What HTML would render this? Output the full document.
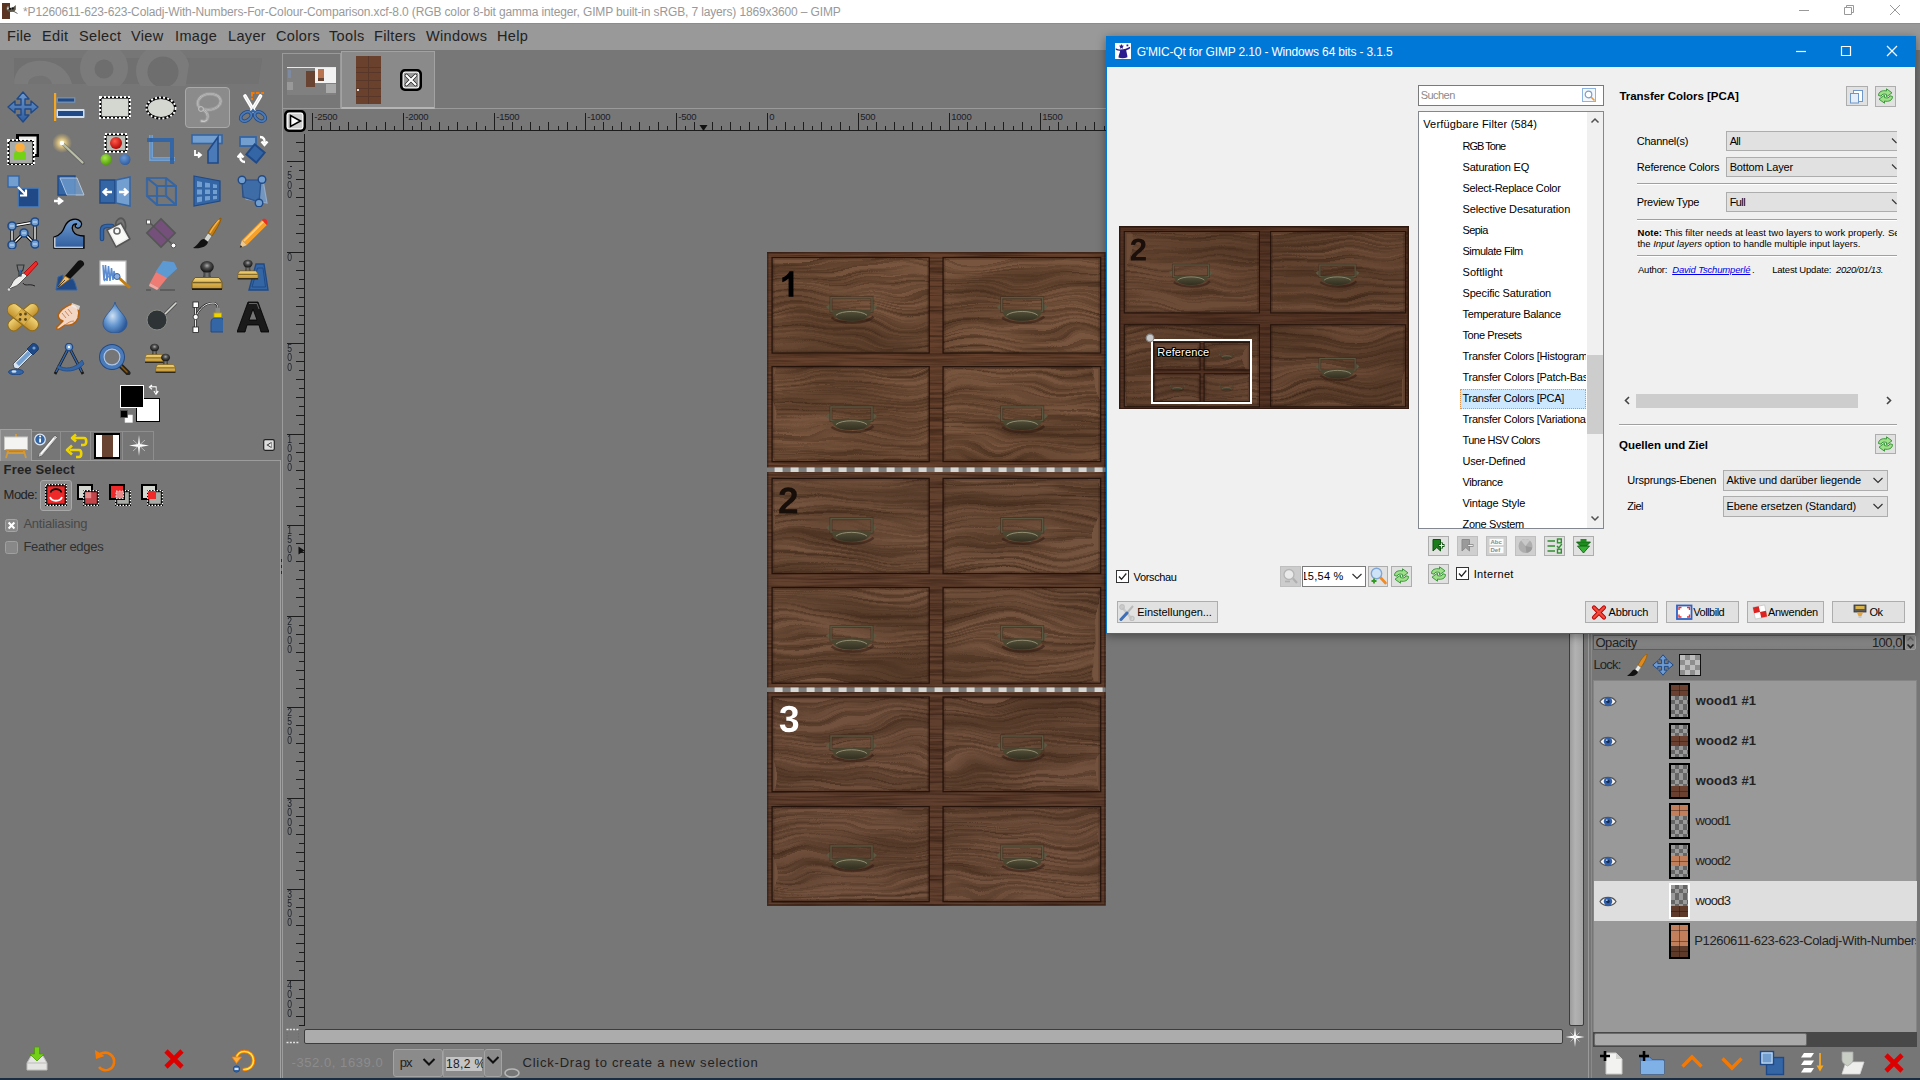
<!DOCTYPE html>
<html><head><meta charset="utf-8"><title>GIMP</title><style>
html,body{margin:0;padding:0;}
body{width:1920px;height:1080px;overflow:hidden;position:relative;background:#777;font-family:"Liberation Sans",sans-serif;}
#r{position:absolute;left:0;top:0;width:1920px;height:1080px;overflow:hidden;}
#r div,#r svg{position:absolute;}
.t{white-space:nowrap;}
</style></head><body>
<svg width="0" height="0" style="position:absolute"><defs>
<linearGradient id="gB" x1="0" y1="0" x2="0" y2="1"><stop offset="0" stop-color="#6f9bd0"/><stop offset="1" stop-color="#2f5c9e"/></linearGradient>
<linearGradient id="gT" x1="0" y1="0" x2="0" y2="1"><stop offset="0" stop-color="#f3d67a"/><stop offset="1" stop-color="#c2912b"/></linearGradient>
<radialGradient id="gGlow"><stop offset="0" stop-color="#fff8d0"/><stop offset=".35" stop-color="#f5d98a" stop-opacity=".8"/><stop offset="1" stop-color="#e0b860" stop-opacity="0"/></radialGradient>
<radialGradient id="gDrop" cx=".4" cy=".45" r=".6"><stop offset="0" stop-color="#cfe0f3"/><stop offset=".5" stop-color="#6a9bd2"/><stop offset="1" stop-color="#2d5a9c"/></radialGradient>
<radialGradient id="gRed" cx=".4" cy=".35" r=".7"><stop offset="0" stop-color="#ff5a4a"/><stop offset="1" stop-color="#b00000"/></radialGradient>
<radialGradient id="gGrn" cx=".4" cy=".35" r=".7"><stop offset="0" stop-color="#a6e84a"/><stop offset="1" stop-color="#4e9a06"/></radialGradient>
<radialGradient id="gBlu" cx=".4" cy=".35" r=".7"><stop offset="0" stop-color="#6a97d0"/><stop offset="1" stop-color="#2c5aa0"/></radialGradient>
<linearGradient id="gStampH" x1="0" y1="0" x2="1" y2="0"><stop offset="0" stop-color="#111"/><stop offset=".5" stop-color="#7a7a7a"/><stop offset="1" stop-color="#111"/></linearGradient>
<radialGradient id="gKnob" cx=".5" cy=".4" r=".6"><stop offset="0" stop-color="#a8a8a8"/><stop offset=".4" stop-color="#4e4e4e"/><stop offset="1" stop-color="#0e0e0e"/></radialGradient>
<pattern id="chk" width="8" height="8" patternUnits="userSpaceOnUse"><rect width="8" height="8" fill="#9b9b9b"/><rect width="4" height="4" fill="#666"/><rect x="4" y="4" width="4" height="4" fill="#666"/></pattern>
<pattern id="dash" width="4" height="4" patternUnits="userSpaceOnUse"><rect width="4" height="4" fill="#fff"/><rect width="2" height="2" fill="#000"/><rect x="2" y="2" width="2" height="2" fill="#000"/></pattern>

<filter id="wood" x="0" y="0" width="100%" height="100%" color-interpolation-filters="sRGB">
 <feTurbulence type="fractalNoise" baseFrequency="0.008 0.3" numOctaves="4" seed="7" result="n"/>
 <feTurbulence type="fractalNoise" baseFrequency="0.012 0.02" numOctaves="2" seed="5" result="w"/>
 <feDisplacementMap in="n" in2="w" scale="34" xChannelSelector="R" yChannelSelector="G" result="nd"/>
 <feColorMatrix in="nd" type="matrix" values="0 0 0 0 0  0 0 0 0 0  0 0 0 0 0  1.5 0 0 0 -0.55" result="a"/>
 <feFlood flood-color="#3a2415" result="f"/>
 <feComposite in="f" in2="a" operator="in" result="g"/>
 <feTurbulence type="fractalNoise" baseFrequency="0.006 0.035" numOctaves="2" seed="3" result="n2"/>
 <feDisplacementMap in="n2" in2="w" scale="30" xChannelSelector="R" yChannelSelector="G" result="n2d"/>
 <feColorMatrix in="n2d" type="matrix" values="0 0 0 0 0  0 0 0 0 0  0 0 0 0 0  0 1.3 0 0 -0.56" result="a2"/>
 <feFlood flood-color="#362113" result="f2"/>
 <feComposite in="f2" in2="a2" operator="in" result="g2"/>
 <feComposite in="g" in2="SourceAlpha" operator="in" result="gc"/>
 <feComposite in="g2" in2="SourceAlpha" operator="in" result="g2c"/>
 <feMerge><feMergeNode in="SourceGraphic"/><feMergeNode in="gc"/><feMergeNode in="g2c"/></feMerge>
</filter>
<filter id="wood2" x="0" y="0" width="100%" height="100%" color-interpolation-filters="sRGB">
 <feTurbulence type="fractalNoise" baseFrequency="0.007 0.27" numOctaves="4" seed="23" result="n"/>
 <feTurbulence type="fractalNoise" baseFrequency="0.011 0.018" numOctaves="2" seed="9" result="w"/>
 <feDisplacementMap in="n" in2="w" scale="34" xChannelSelector="R" yChannelSelector="G" result="nd"/>
 <feColorMatrix in="nd" type="matrix" values="0 0 0 0 0  0 0 0 0 0  0 0 0 0 0  1.5 0 0 0 -0.55" result="a"/>
 <feFlood flood-color="#3a2415" result="f"/>
 <feComposite in="f" in2="a" operator="in" result="g"/>
 <feTurbulence type="fractalNoise" baseFrequency="0.005 0.03" numOctaves="2" seed="11" result="n2"/>
 <feDisplacementMap in="n2" in2="w" scale="30" xChannelSelector="R" yChannelSelector="G" result="n2d"/>
 <feColorMatrix in="n2d" type="matrix" values="0 0 0 0 0  0 0 0 0 0  0 0 0 0 0  0 1.3 0 0 -0.56" result="a2"/>
 <feFlood flood-color="#362113" result="f2"/>
 <feComposite in="f2" in2="a2" operator="in" result="g2"/>
 <feComposite in="g" in2="SourceAlpha" operator="in" result="gc"/>
 <feComposite in="g2" in2="SourceAlpha" operator="in" result="g2c"/>
 <feMerge><feMergeNode in="SourceGraphic"/><feMergeNode in="gc"/><feMergeNode in="g2c"/></feMerge>
</filter>
<filter id="woodf" x="0" y="0" width="100%" height="100%" color-interpolation-filters="sRGB">
 <feTurbulence type="fractalNoise" baseFrequency="0.015 0.45" numOctaves="3" seed="4" result="n"/>
 <feColorMatrix in="n" type="matrix" values="0 0 0 0 0  0 0 0 0 0  0 0 0 0 0  1.2 0 0 0 -0.42" result="a"/>
 <feFlood flood-color="#2a160c" result="f"/>
 <feComposite in="f" in2="a" operator="in" result="g"/>
 <feMerge><feMergeNode in="SourceGraphic"/><feMergeNode in="g"/></feMerge>
</filter>
<linearGradient id="brass" x1="0" y1="0" x2="0" y2="1"><stop offset="0" stop-color="#545039"/><stop offset=".5" stop-color="#423f2d"/><stop offset="1" stop-color="#322f20"/></linearGradient>
</defs></svg>
<div id="r">
<div style="left:283px;top:50px;width:1305px;height:1028px;background:#777777;"></div>
<div style="left:283px;top:108px;width:1304px;height:1px;background:#9a9a9a;"></div>
<div style="left:282px;top:53px;width:59px;height:56px;border:1px solid #9a9a9a;border-bottom:none;box-sizing:border-box;z-index:3;"></div>
<div style="left:287px;top:66.5px;width:49px;height:1.5px;background:#e8e8e8;"></div>
<div style="left:287px;top:68px;width:49px;height:27px;background:#808080;"></div>
<div style="left:306px;top:71px;width:9px;height:16px;background:#6a4432;"></div>
<div style="left:315px;top:68px;width:21px;height:15px;background:#f2f2f2;"></div>
<div style="left:318px;top:69px;width:6px;height:9px;background:#b87350;"></div>
<div style="left:318px;top:78px;width:6px;height:3px;background:#6a4432;"></div>
<div style="left:326px;top:84px;width:10px;height:9px;background:#a9a9a9;"></div>
<div style="left:287px;top:82px;width:6px;height:8px;background:#999;"></div>
<div style="left:288px;top:70px;width:3px;height:8px;background:#7d8aa0;"></div>
<div style="left:340.5px;top:51px;width:94px;height:58px;border:1px solid #a2a2a2;border-bottom:2px solid #b5b5b5;box-sizing:border-box;background:#8a8a8a;"></div>
<div style="left:356px;top:56px;width:25px;height:48px;background:#69412d;"></div>
<div style="left:368px;top:56px;width:1px;height:48px;background:#58362a;"></div>
<div style="left:356px;top:67px;width:25px;height:1px;background:#58362a;"></div>
<div style="left:356px;top:71.5px;width:25px;height:1px;background:#58362a;"></div>
<div style="left:356px;top:80px;width:25px;height:1px;background:#58362a;"></div>
<div style="left:356px;top:88px;width:25px;height:1px;background:#58362a;"></div>
<div style="left:356px;top:96px;width:25px;height:1px;background:#58362a;"></div>
<div style="left:357px;top:89px;width:2px;height:2px;background:#ddd;"></div>
<svg style="left:400px;top:69px;" width="22" height="22" viewBox="0 0 22 22"><rect x="1.300" y="1.300" width="19.400" height="19.400" rx="3.500" fill="#9a9a9a" stroke="#000" stroke-width="2.600"/><rect x="3.200" y="3.200" width="15.600" height="15.600" rx="2" fill="none" stroke="#fff" stroke-width="1"/><path d="M6.500 6.500 L15.500 15.500 M15.500 6.500 L6.500 15.500" stroke="#222" stroke-width="3.600" stroke-linecap="round"/><path d="M6.500 6.500 L15.500 15.500 M15.500 6.500 L6.500 15.500" stroke="#fff" stroke-width="2.200" stroke-linecap="round"/></svg>
<svg style="left:284px;top:110px;" width="22" height="22" viewBox="0 0 22 22"><rect x="1.3" y="1.3" width="19.4" height="19.4" rx="3.5" fill="#cfcfcf" stroke="#000" stroke-width="2.6"/><rect x="3.2" y="3.2" width="15.6" height="15.6" rx="2" fill="none" stroke="#fff" stroke-width="1"/><path d="M6.500 5.500 L16.500 11 L6.500 16.500 Z" fill="#fff" stroke="#000" stroke-width="1.6"/></svg>
<svg style="left:0;top:0" width="1120" height="140"><g stroke="#1c1c1c" stroke-width="1" fill="none" shape-rendering="crispEdges"><path d="M312.3 113 V130.5" /><path d="M321.4 125.5 V130.5" /><path d="M330.5 122 V130.5" /><path d="M339.6 125.5 V130.5" /><path d="M348.7 122 V130.5" /><path d="M357.8 125.5 V130.5" /><path d="M366.9 122 V130.5" /><path d="M376.0 125.5 V130.5" /><path d="M385.1 122 V130.5" /><path d="M394.2 125.5 V130.5" /><path d="M403.3 113 V130.5" /><path d="M412.4 125.5 V130.5" /><path d="M421.5 122 V130.5" /><path d="M430.6 125.5 V130.5" /><path d="M439.7 122 V130.5" /><path d="M448.8 125.5 V130.5" /><path d="M457.9 122 V130.5" /><path d="M467.0 125.5 V130.5" /><path d="M476.1 122 V130.5" /><path d="M485.2 125.5 V130.5" /><path d="M494.3 113 V130.5" /><path d="M503.4 125.5 V130.5" /><path d="M512.5 122 V130.5" /><path d="M521.6 125.5 V130.5" /><path d="M530.7 122 V130.5" /><path d="M539.8 125.5 V130.5" /><path d="M548.9 122 V130.5" /><path d="M558.0 125.5 V130.5" /><path d="M567.1 122 V130.5" /><path d="M576.2 125.5 V130.5" /><path d="M585.3 113 V130.5" /><path d="M594.4 125.5 V130.5" /><path d="M603.5 122 V130.5" /><path d="M612.6 125.5 V130.5" /><path d="M621.7 122 V130.5" /><path d="M630.8 125.5 V130.5" /><path d="M639.9 122 V130.5" /><path d="M649.0 125.5 V130.5" /><path d="M658.1 122 V130.5" /><path d="M667.2 125.5 V130.5" /><path d="M676.3 113 V130.5" /><path d="M685.4 125.5 V130.5" /><path d="M694.5 122 V130.5" /><path d="M703.6 125.5 V130.5" /><path d="M712.7 122 V130.5" /><path d="M721.8 125.5 V130.5" /><path d="M730.9 122 V130.5" /><path d="M740.0 125.5 V130.5" /><path d="M749.1 122 V130.5" /><path d="M758.2 125.5 V130.5" /><path d="M767.3 113 V130.5" /><path d="M776.4 125.5 V130.5" /><path d="M785.5 122 V130.5" /><path d="M794.6 125.5 V130.5" /><path d="M803.7 122 V130.5" /><path d="M812.8 125.5 V130.5" /><path d="M821.9 122 V130.5" /><path d="M831.0 125.5 V130.5" /><path d="M840.1 122 V130.5" /><path d="M849.2 125.5 V130.5" /><path d="M858.3 113 V130.5" /><path d="M867.4 125.5 V130.5" /><path d="M876.5 122 V130.5" /><path d="M885.6 125.5 V130.5" /><path d="M894.7 122 V130.5" /><path d="M903.8 125.5 V130.5" /><path d="M912.9 122 V130.5" /><path d="M922.0 125.5 V130.5" /><path d="M931.1 122 V130.5" /><path d="M940.2 125.5 V130.5" /><path d="M949.3 113 V130.5" /><path d="M958.4 125.5 V130.5" /><path d="M967.5 122 V130.5" /><path d="M976.6 125.5 V130.5" /><path d="M985.7 122 V130.5" /><path d="M994.8 125.5 V130.5" /><path d="M1003.9 122 V130.5" /><path d="M1013.0 125.5 V130.5" /><path d="M1022.1 122 V130.5" /><path d="M1031.2 125.5 V130.5" /><path d="M1040.3 113 V130.5" /><path d="M1049.4 125.5 V130.5" /><path d="M1058.5 122 V130.5" /><path d="M1067.6 125.5 V130.5" /><path d="M1076.7 122 V130.5" /><path d="M1085.8 125.5 V130.5" /><path d="M1094.9 122 V130.5" /><path d="M1104.0 125.5 V130.5" /><path d="M308 130.5 H1110"/></g><path d="M699.5 125 L707.500 125 L703.500 131 Z" fill="#111"/></svg>
<div class="t" style="left:314.29999999999995px;top:109.8px;font-size:9.5px;line-height:13px;color:#1c2028;letter-spacing:-.25px;">-2500</div>
<div class="t" style="left:405.29999999999995px;top:109.8px;font-size:9.5px;line-height:13px;color:#1c2028;letter-spacing:-.25px;">-2000</div>
<div class="t" style="left:496.29999999999995px;top:109.8px;font-size:9.5px;line-height:13px;color:#1c2028;letter-spacing:-.25px;">-1500</div>
<div class="t" style="left:587.3px;top:109.8px;font-size:9.5px;line-height:13px;color:#1c2028;letter-spacing:-.25px;">-1000</div>
<div class="t" style="left:678.3px;top:109.8px;font-size:9.5px;line-height:13px;color:#1c2028;letter-spacing:-.25px;">-500</div>
<div class="t" style="left:769.3px;top:109.8px;font-size:9.5px;line-height:13px;color:#1c2028;letter-spacing:-.25px;">0</div>
<div class="t" style="left:860.3px;top:109.8px;font-size:9.5px;line-height:13px;color:#1c2028;letter-spacing:-.25px;">500</div>
<div class="t" style="left:951.3px;top:109.8px;font-size:9.5px;line-height:13px;color:#1c2028;letter-spacing:-.25px;">1000</div>
<div class="t" style="left:1042.3px;top:109.8px;font-size:9.5px;line-height:13px;color:#1c2028;letter-spacing:-.25px;">1500</div>
<svg style="left:0;top:0" width="310" height="1030"><g stroke="#1c1c1c" stroke-width="1" fill="none" shape-rendering="crispEdges"><path d="M296 142.8 H304.5"/><path d="M299 151.9 H304.5"/><path d="M287 161.0 H304.5"/><path d="M299 170.1 H304.5"/><path d="M296 179.2 H304.5"/><path d="M299 188.3 H304.5"/><path d="M296 197.4 H304.5"/><path d="M299 206.5 H304.5"/><path d="M296 215.6 H304.5"/><path d="M299 224.7 H304.5"/><path d="M296 233.8 H304.5"/><path d="M299 242.9 H304.5"/><path d="M287 252.0 H304.5"/><path d="M299 261.1 H304.5"/><path d="M296 270.2 H304.5"/><path d="M299 279.3 H304.5"/><path d="M296 288.4 H304.5"/><path d="M299 297.5 H304.5"/><path d="M296 306.6 H304.5"/><path d="M299 315.7 H304.5"/><path d="M296 324.8 H304.5"/><path d="M299 333.9 H304.5"/><path d="M287 343.0 H304.5"/><path d="M299 352.1 H304.5"/><path d="M296 361.2 H304.5"/><path d="M299 370.3 H304.5"/><path d="M296 379.4 H304.5"/><path d="M299 388.5 H304.5"/><path d="M296 397.6 H304.5"/><path d="M299 406.7 H304.5"/><path d="M296 415.8 H304.5"/><path d="M299 424.9 H304.5"/><path d="M287 434.0 H304.5"/><path d="M299 443.1 H304.5"/><path d="M296 452.2 H304.5"/><path d="M299 461.3 H304.5"/><path d="M296 470.4 H304.5"/><path d="M299 479.5 H304.5"/><path d="M296 488.6 H304.5"/><path d="M299 497.7 H304.5"/><path d="M296 506.8 H304.5"/><path d="M299 515.9 H304.5"/><path d="M287 525.0 H304.5"/><path d="M299 534.1 H304.5"/><path d="M296 543.2 H304.5"/><path d="M299 552.3 H304.5"/><path d="M296 561.4 H304.5"/><path d="M299 570.5 H304.5"/><path d="M296 579.6 H304.5"/><path d="M299 588.7 H304.5"/><path d="M296 597.8 H304.5"/><path d="M299 606.9 H304.5"/><path d="M287 616.0 H304.5"/><path d="M299 625.1 H304.5"/><path d="M296 634.2 H304.5"/><path d="M299 643.3 H304.5"/><path d="M296 652.4 H304.5"/><path d="M299 661.5 H304.5"/><path d="M296 670.6 H304.5"/><path d="M299 679.7 H304.5"/><path d="M296 688.8 H304.5"/><path d="M299 697.9 H304.5"/><path d="M287 707.0 H304.5"/><path d="M299 716.1 H304.5"/><path d="M296 725.2 H304.5"/><path d="M299 734.3 H304.5"/><path d="M296 743.4 H304.5"/><path d="M299 752.5 H304.5"/><path d="M296 761.6 H304.5"/><path d="M299 770.7 H304.5"/><path d="M296 779.8 H304.5"/><path d="M299 788.9 H304.5"/><path d="M287 798.0 H304.5"/><path d="M299 807.1 H304.5"/><path d="M296 816.2 H304.5"/><path d="M299 825.3 H304.5"/><path d="M296 834.4 H304.5"/><path d="M299 843.5 H304.5"/><path d="M296 852.6 H304.5"/><path d="M299 861.7 H304.5"/><path d="M296 870.8 H304.5"/><path d="M299 879.9 H304.5"/><path d="M287 889.0 H304.5"/><path d="M299 898.1 H304.5"/><path d="M296 907.2 H304.5"/><path d="M299 916.3 H304.5"/><path d="M296 925.4 H304.5"/><path d="M299 934.5 H304.5"/><path d="M296 943.6 H304.5"/><path d="M299 952.7 H304.5"/><path d="M296 961.8 H304.5"/><path d="M299 970.9 H304.5"/><path d="M287 980.0 H304.5"/><path d="M299 989.1 H304.5"/><path d="M296 998.2 H304.5"/><path d="M299 1007.3 H304.5"/><path d="M296 1016.4 H304.5"/><path d="M299 1025.5 H304.5"/><path d="M304.5 134 V1026"/></g><path d="M298.500 546.500 L304.500 550.500 L298.500 554.500 Z" fill="#111"/></svg>
<div style="left:290px;top:166.3px;width:2px;height:1px;background:#20242c;"></div>
<div class="t" style="left:287.3px;top:168.35000000000002px;font-size:9.5px;line-height:13px;color:#1c2028;transform:scale(.9,1.17);transform-origin:50% 50%;">5</div>
<div class="t" style="left:287.3px;top:177.60000000000002px;font-size:9.5px;line-height:13px;color:#1c2028;transform:scale(.9,1.17);transform-origin:50% 50%;">0</div>
<div class="t" style="left:287.3px;top:186.85000000000002px;font-size:9.5px;line-height:13px;color:#1c2028;transform:scale(.9,1.17);transform-origin:50% 50%;">0</div>
<div class="t" style="left:287.3px;top:250.10000000000002px;font-size:9.5px;line-height:13px;color:#1c2028;transform:scale(.9,1.17);transform-origin:50% 50%;">0</div>
<div class="t" style="left:287.3px;top:341.1px;font-size:9.5px;line-height:13px;color:#1c2028;transform:scale(.9,1.17);transform-origin:50% 50%;">5</div>
<div class="t" style="left:287.3px;top:350.35px;font-size:9.5px;line-height:13px;color:#1c2028;transform:scale(.9,1.17);transform-origin:50% 50%;">0</div>
<div class="t" style="left:287.3px;top:359.6px;font-size:9.5px;line-height:13px;color:#1c2028;transform:scale(.9,1.17);transform-origin:50% 50%;">0</div>
<div class="t" style="left:287.3px;top:432.1px;font-size:9.5px;line-height:13px;color:#1c2028;transform:scale(.9,1.17);transform-origin:50% 50%;">1</div>
<div class="t" style="left:287.3px;top:441.35px;font-size:9.5px;line-height:13px;color:#1c2028;transform:scale(.9,1.17);transform-origin:50% 50%;">0</div>
<div class="t" style="left:287.3px;top:450.6px;font-size:9.5px;line-height:13px;color:#1c2028;transform:scale(.9,1.17);transform-origin:50% 50%;">0</div>
<div class="t" style="left:287.3px;top:459.85px;font-size:9.5px;line-height:13px;color:#1c2028;transform:scale(.9,1.17);transform-origin:50% 50%;">0</div>
<div class="t" style="left:287.3px;top:523.0999999999999px;font-size:9.5px;line-height:13px;color:#1c2028;transform:scale(.9,1.17);transform-origin:50% 50%;">1</div>
<div class="t" style="left:287.3px;top:532.3499999999999px;font-size:9.5px;line-height:13px;color:#1c2028;transform:scale(.9,1.17);transform-origin:50% 50%;">5</div>
<div class="t" style="left:287.3px;top:541.5999999999999px;font-size:9.5px;line-height:13px;color:#1c2028;transform:scale(.9,1.17);transform-origin:50% 50%;">0</div>
<div class="t" style="left:287.3px;top:550.8499999999999px;font-size:9.5px;line-height:13px;color:#1c2028;transform:scale(.9,1.17);transform-origin:50% 50%;">0</div>
<div class="t" style="left:287.3px;top:614.0999999999999px;font-size:9.5px;line-height:13px;color:#1c2028;transform:scale(.9,1.17);transform-origin:50% 50%;">2</div>
<div class="t" style="left:287.3px;top:623.3499999999999px;font-size:9.5px;line-height:13px;color:#1c2028;transform:scale(.9,1.17);transform-origin:50% 50%;">0</div>
<div class="t" style="left:287.3px;top:632.5999999999999px;font-size:9.5px;line-height:13px;color:#1c2028;transform:scale(.9,1.17);transform-origin:50% 50%;">0</div>
<div class="t" style="left:287.3px;top:641.8499999999999px;font-size:9.5px;line-height:13px;color:#1c2028;transform:scale(.9,1.17);transform-origin:50% 50%;">0</div>
<div class="t" style="left:287.3px;top:705.0999999999999px;font-size:9.5px;line-height:13px;color:#1c2028;transform:scale(.9,1.17);transform-origin:50% 50%;">2</div>
<div class="t" style="left:287.3px;top:714.3499999999999px;font-size:9.5px;line-height:13px;color:#1c2028;transform:scale(.9,1.17);transform-origin:50% 50%;">5</div>
<div class="t" style="left:287.3px;top:723.5999999999999px;font-size:9.5px;line-height:13px;color:#1c2028;transform:scale(.9,1.17);transform-origin:50% 50%;">0</div>
<div class="t" style="left:287.3px;top:732.8499999999999px;font-size:9.5px;line-height:13px;color:#1c2028;transform:scale(.9,1.17);transform-origin:50% 50%;">0</div>
<div class="t" style="left:287.3px;top:796.0999999999999px;font-size:9.5px;line-height:13px;color:#1c2028;transform:scale(.9,1.17);transform-origin:50% 50%;">3</div>
<div class="t" style="left:287.3px;top:805.3499999999999px;font-size:9.5px;line-height:13px;color:#1c2028;transform:scale(.9,1.17);transform-origin:50% 50%;">0</div>
<div class="t" style="left:287.3px;top:814.5999999999999px;font-size:9.5px;line-height:13px;color:#1c2028;transform:scale(.9,1.17);transform-origin:50% 50%;">0</div>
<div class="t" style="left:287.3px;top:823.8499999999999px;font-size:9.5px;line-height:13px;color:#1c2028;transform:scale(.9,1.17);transform-origin:50% 50%;">0</div>
<div class="t" style="left:287.3px;top:887.0999999999999px;font-size:9.5px;line-height:13px;color:#1c2028;transform:scale(.9,1.17);transform-origin:50% 50%;">3</div>
<div class="t" style="left:287.3px;top:896.3499999999999px;font-size:9.5px;line-height:13px;color:#1c2028;transform:scale(.9,1.17);transform-origin:50% 50%;">5</div>
<div class="t" style="left:287.3px;top:905.5999999999999px;font-size:9.5px;line-height:13px;color:#1c2028;transform:scale(.9,1.17);transform-origin:50% 50%;">0</div>
<div class="t" style="left:287.3px;top:914.8499999999999px;font-size:9.5px;line-height:13px;color:#1c2028;transform:scale(.9,1.17);transform-origin:50% 50%;">0</div>
<div class="t" style="left:287.3px;top:978.0999999999999px;font-size:9.5px;line-height:13px;color:#1c2028;transform:scale(.9,1.17);transform-origin:50% 50%;">4</div>
<div class="t" style="left:287.3px;top:987.3499999999999px;font-size:9.5px;line-height:13px;color:#1c2028;transform:scale(.9,1.17);transform-origin:50% 50%;">0</div>
<div class="t" style="left:287.3px;top:996.5999999999999px;font-size:9.5px;line-height:13px;color:#1c2028;transform:scale(.9,1.17);transform-origin:50% 50%;">0</div>
<div class="t" style="left:287.3px;top:1005.8499999999999px;font-size:9.5px;line-height:13px;color:#1c2028;transform:scale(.9,1.17);transform-origin:50% 50%;">0</div>
<svg style="left:767px;top:252px" width="338.7" height="653.700" viewBox="0 0 338.7 653.700">
<filter id="wood" x="0" y="0" width="100%" height="100%" color-interpolation-filters="sRGB">
 <feTurbulence type="fractalNoise" baseFrequency="0.008 0.3" numOctaves="4" seed="7" result="n"/>
 <feTurbulence type="fractalNoise" baseFrequency="0.012 0.02" numOctaves="2" seed="5" result="w"/>
 <feDisplacementMap in="n" in2="w" scale="34" xChannelSelector="R" yChannelSelector="G" result="nd"/>
 <feColorMatrix in="nd" type="matrix" values="0 0 0 0 0  0 0 0 0 0  0 0 0 0 0  1.5 0 0 0 -0.55" result="a"/>
 <feFlood flood-color="#3a2415" result="f"/>
 <feComposite in="f" in2="a" operator="in" result="g"/>
 <feTurbulence type="fractalNoise" baseFrequency="0.006 0.035" numOctaves="2" seed="3" result="n2"/>
 <feDisplacementMap in="n2" in2="w" scale="30" xChannelSelector="R" yChannelSelector="G" result="n2d"/>
 <feColorMatrix in="n2d" type="matrix" values="0 0 0 0 0  0 0 0 0 0  0 0 0 0 0  0 1.3 0 0 -0.56" result="a2"/>
 <feFlood flood-color="#362113" result="f2"/>
 <feComposite in="f2" in2="a2" operator="in" result="g2"/>
 <feComposite in="g" in2="SourceAlpha" operator="in" result="gc"/>
 <feComposite in="g2" in2="SourceAlpha" operator="in" result="g2c"/>
 <feMerge><feMergeNode in="SourceGraphic"/><feMergeNode in="gc"/><feMergeNode in="g2c"/></feMerge>
</filter>
<filter id="wood2" x="0" y="0" width="100%" height="100%" color-interpolation-filters="sRGB">
 <feTurbulence type="fractalNoise" baseFrequency="0.007 0.27" numOctaves="4" seed="23" result="n"/>
 <feTurbulence type="fractalNoise" baseFrequency="0.011 0.018" numOctaves="2" seed="9" result="w"/>
 <feDisplacementMap in="n" in2="w" scale="34" xChannelSelector="R" yChannelSelector="G" result="nd"/>
 <feColorMatrix in="nd" type="matrix" values="0 0 0 0 0  0 0 0 0 0  0 0 0 0 0  1.5 0 0 0 -0.55" result="a"/>
 <feFlood flood-color="#3a2415" result="f"/>
 <feComposite in="f" in2="a" operator="in" result="g"/>
 <feTurbulence type="fractalNoise" baseFrequency="0.005 0.03" numOctaves="2" seed="11" result="n2"/>
 <feDisplacementMap in="n2" in2="w" scale="30" xChannelSelector="R" yChannelSelector="G" result="n2d"/>
 <feColorMatrix in="n2d" type="matrix" values="0 0 0 0 0  0 0 0 0 0  0 0 0 0 0  0 1.3 0 0 -0.56" result="a2"/>
 <feFlood flood-color="#362113" result="f2"/>
 <feComposite in="f2" in2="a2" operator="in" result="g2"/>
 <feComposite in="g" in2="SourceAlpha" operator="in" result="gc"/>
 <feComposite in="g2" in2="SourceAlpha" operator="in" result="g2c"/>
 <feMerge><feMergeNode in="SourceGraphic"/><feMergeNode in="gc"/><feMergeNode in="g2c"/></feMerge>
</filter>
<filter id="woodf" x="0" y="0" width="100%" height="100%" color-interpolation-filters="sRGB">
 <feTurbulence type="fractalNoise" baseFrequency="0.015 0.45" numOctaves="3" seed="4" result="n"/>
 <feColorMatrix in="n" type="matrix" values="0 0 0 0 0  0 0 0 0 0  0 0 0 0 0  1.2 0 0 0 -0.42" result="a"/>
 <feFlood flood-color="#2a160c" result="f"/>
 <feComposite in="f" in2="a" operator="in" result="g"/>
 <feMerge><feMergeNode in="SourceGraphic"/><feMergeNode in="g"/></feMerge>
</filter>
<linearGradient id="brass" x1="0" y1="0" x2="0" y2="1"><stop offset="0" stop-color="#545039"/><stop offset=".5" stop-color="#423f2d"/><stop offset="1" stop-color="#322f20"/></linearGradient>
<rect x="0" y="0" width="338.7" height="217.7" fill="#66422e" filter="url(#woodf)"/><g filter="url(#wood)"><rect x="5.1" y="5.5" width="157.1" height="95.5" fill="#78553e"/><rect x="5.1" y="114.7" width="157.1" height="94.9" fill="#78553e"/><rect x="176.1" y="5.5" width="157.6" height="95.5" fill="#78553e"/><rect x="176.1" y="114.7" width="157.6" height="94.9" fill="#78553e"/></g><rect x="5.1" y="5.5" width="157.1" height="95.5" fill="none" stroke="#1a0c06" stroke-width="1.30" opacity=".85"/><rect x="6.6" y="7.0" width="154.1" height="92.5" fill="none" stroke="#2a140c" stroke-width="1.6" opacity=".22"/><rect x="5.1" y="114.7" width="157.1" height="94.9" fill="none" stroke="#1a0c06" stroke-width="1.30" opacity=".85"/><rect x="6.6" y="116.2" width="154.1" height="91.9" fill="none" stroke="#2a140c" stroke-width="1.6" opacity=".22"/><rect x="176.1" y="5.5" width="157.6" height="95.5" fill="none" stroke="#1a0c06" stroke-width="1.30" opacity=".85"/><rect x="177.6" y="7.0" width="154.6" height="92.5" fill="none" stroke="#2a140c" stroke-width="1.6" opacity=".22"/><rect x="176.1" y="114.7" width="157.6" height="94.9" fill="none" stroke="#1a0c06" stroke-width="1.30" opacity=".85"/><rect x="177.6" y="116.2" width="154.6" height="91.9" fill="none" stroke="#2a140c" stroke-width="1.6" opacity=".22"/><rect x="0.75" y="0.75" width="337.2" height="216.2" fill="none" stroke="#2a140c" stroke-width="1.5" opacity=".5"/><g transform="translate(84.5 56.7) scale(1)"><path d="M-25.5 -2 L-21.5 -5 L-21.5 2 Z M25.5 -2 L21.5 -5 L21.500 2 Z" fill="#5c5842"/><path d="M-20 9 C-10 16 14 16 22 8" fill="none" stroke="#24120a" stroke-width="2.5" opacity=".45"/><rect x="-20.500" y="-11" width="41" height="13.500" fill="none" stroke="#3a2a1c" stroke-width="3" opacity=".6"/><rect x="-20.500" y="-11" width="41" height="13.500" fill="none" stroke="#5a563f" stroke-width="1.400"/><path d="M-19.500 3 C-19 8 -14 12 0 12 C14 12 19 8 19.500 3 C12 0 -12 0 -19.500 3 Z" fill="#4a4630"/><ellipse cx="0" cy="7.300" rx="15.500" ry="4.800" fill="url(#brass)"/><path d="M-15.500 6.500 C-10 1.500 10 1.500 15.500 6.500" fill="none" stroke="#9a9478" stroke-width=".900"/></g><g transform="translate(84.5 166) scale(1)"><path d="M-25.5 -2 L-21.5 -5 L-21.5 2 Z M25.5 -2 L21.5 -5 L21.500 2 Z" fill="#5c5842"/><path d="M-20 9 C-10 16 14 16 22 8" fill="none" stroke="#24120a" stroke-width="2.5" opacity=".45"/><rect x="-20.500" y="-11" width="41" height="13.500" fill="none" stroke="#3a2a1c" stroke-width="3" opacity=".6"/><rect x="-20.500" y="-11" width="41" height="13.500" fill="none" stroke="#5a563f" stroke-width="1.400"/><path d="M-19.500 3 C-19 8 -14 12 0 12 C14 12 19 8 19.500 3 C12 0 -12 0 -19.500 3 Z" fill="#4a4630"/><ellipse cx="0" cy="7.300" rx="15.500" ry="4.800" fill="url(#brass)"/><path d="M-15.500 6.500 C-10 1.500 10 1.500 15.500 6.500" fill="none" stroke="#9a9478" stroke-width=".900"/></g><g transform="translate(255.2 56.7) scale(1)"><path d="M-25.5 -2 L-21.5 -5 L-21.5 2 Z M25.5 -2 L21.5 -5 L21.500 2 Z" fill="#5c5842"/><path d="M-20 9 C-10 16 14 16 22 8" fill="none" stroke="#24120a" stroke-width="2.5" opacity=".45"/><rect x="-20.500" y="-11" width="41" height="13.500" fill="none" stroke="#3a2a1c" stroke-width="3" opacity=".6"/><rect x="-20.500" y="-11" width="41" height="13.500" fill="none" stroke="#5a563f" stroke-width="1.400"/><path d="M-19.500 3 C-19 8 -14 12 0 12 C14 12 19 8 19.500 3 C12 0 -12 0 -19.500 3 Z" fill="#4a4630"/><ellipse cx="0" cy="7.300" rx="15.500" ry="4.800" fill="url(#brass)"/><path d="M-15.500 6.500 C-10 1.500 10 1.500 15.500 6.500" fill="none" stroke="#9a9478" stroke-width=".900"/></g><g transform="translate(255.2 166) scale(1)"><path d="M-25.5 -2 L-21.5 -5 L-21.5 2 Z M25.5 -2 L21.5 -5 L21.500 2 Z" fill="#5c5842"/><path d="M-20 9 C-10 16 14 16 22 8" fill="none" stroke="#24120a" stroke-width="2.5" opacity=".45"/><rect x="-20.500" y="-11" width="41" height="13.500" fill="none" stroke="#3a2a1c" stroke-width="3" opacity=".6"/><rect x="-20.500" y="-11" width="41" height="13.500" fill="none" stroke="#5a563f" stroke-width="1.400"/><path d="M-19.500 3 C-19 8 -14 12 0 12 C14 12 19 8 19.500 3 C12 0 -12 0 -19.500 3 Z" fill="#4a4630"/><ellipse cx="0" cy="7.300" rx="15.500" ry="4.800" fill="url(#brass)"/><path d="M-15.500 6.500 C-10 1.500 10 1.500 15.500 6.500" fill="none" stroke="#9a9478" stroke-width=".900"/></g><path transform="translate(12.49 44.80) scale(0.01732 -0.01732)" d="M806 0H525V1059Q371 915 162 846V1101Q272 1137 401 1237.5Q530 1338 578 1472H806Z" fill="#000"/><rect x="0" y="217.7" width="338.7" height="220" fill="#63412f" filter="url(#woodf)"/><g filter="url(#wood2)"><rect x="5.1" y="226.4" width="157.1" height="95.2" fill="#75543f"/><rect x="5.1" y="335.5" width="157.1" height="95.7" fill="#75543f"/><rect x="176.1" y="226.4" width="157.6" height="95.2" fill="#75543f"/><rect x="176.1" y="335.5" width="157.6" height="95.7" fill="#75543f"/></g><rect x="5.1" y="226.4" width="157.1" height="95.2" fill="none" stroke="#1a0c06" stroke-width="1.30" opacity=".85"/><rect x="6.6" y="227.9" width="154.1" height="92.2" fill="none" stroke="#2a140c" stroke-width="1.6" opacity=".22"/><rect x="5.1" y="335.5" width="157.1" height="95.7" fill="none" stroke="#1a0c06" stroke-width="1.30" opacity=".85"/><rect x="6.6" y="337.0" width="154.1" height="92.7" fill="none" stroke="#2a140c" stroke-width="1.6" opacity=".22"/><rect x="176.1" y="226.4" width="157.6" height="95.2" fill="none" stroke="#1a0c06" stroke-width="1.30" opacity=".85"/><rect x="177.6" y="227.9" width="154.6" height="92.2" fill="none" stroke="#2a140c" stroke-width="1.6" opacity=".22"/><rect x="176.1" y="335.5" width="157.6" height="95.7" fill="none" stroke="#1a0c06" stroke-width="1.30" opacity=".85"/><rect x="177.6" y="337.0" width="154.6" height="92.7" fill="none" stroke="#2a140c" stroke-width="1.6" opacity=".22"/><rect x="0.75" y="218.45" width="337.2" height="218.5" fill="none" stroke="#2a140c" stroke-width="1.5" opacity=".5"/><g transform="translate(84.5 277.59999999999997) scale(1)"><path d="M-25.5 -2 L-21.5 -5 L-21.5 2 Z M25.5 -2 L21.5 -5 L21.500 2 Z" fill="#5c5842"/><path d="M-20 9 C-10 16 14 16 22 8" fill="none" stroke="#24120a" stroke-width="2.5" opacity=".45"/><rect x="-20.500" y="-11" width="41" height="13.500" fill="none" stroke="#3a2a1c" stroke-width="3" opacity=".6"/><rect x="-20.500" y="-11" width="41" height="13.500" fill="none" stroke="#5a563f" stroke-width="1.400"/><path d="M-19.500 3 C-19 8 -14 12 0 12 C14 12 19 8 19.500 3 C12 0 -12 0 -19.500 3 Z" fill="#4a4630"/><ellipse cx="0" cy="7.300" rx="15.500" ry="4.800" fill="url(#brass)"/><path d="M-15.500 6.500 C-10 1.500 10 1.500 15.500 6.500" fill="none" stroke="#9a9478" stroke-width=".900"/></g><g transform="translate(84.5 385.5) scale(1)"><path d="M-25.5 -2 L-21.5 -5 L-21.5 2 Z M25.5 -2 L21.5 -5 L21.500 2 Z" fill="#5c5842"/><path d="M-20 9 C-10 16 14 16 22 8" fill="none" stroke="#24120a" stroke-width="2.5" opacity=".45"/><rect x="-20.500" y="-11" width="41" height="13.500" fill="none" stroke="#3a2a1c" stroke-width="3" opacity=".6"/><rect x="-20.500" y="-11" width="41" height="13.500" fill="none" stroke="#5a563f" stroke-width="1.400"/><path d="M-19.500 3 C-19 8 -14 12 0 12 C14 12 19 8 19.500 3 C12 0 -12 0 -19.500 3 Z" fill="#4a4630"/><ellipse cx="0" cy="7.300" rx="15.500" ry="4.800" fill="url(#brass)"/><path d="M-15.500 6.500 C-10 1.500 10 1.500 15.500 6.500" fill="none" stroke="#9a9478" stroke-width=".900"/></g><g transform="translate(255.2 277.59999999999997) scale(1)"><path d="M-25.5 -2 L-21.5 -5 L-21.5 2 Z M25.5 -2 L21.5 -5 L21.500 2 Z" fill="#5c5842"/><path d="M-20 9 C-10 16 14 16 22 8" fill="none" stroke="#24120a" stroke-width="2.5" opacity=".45"/><rect x="-20.500" y="-11" width="41" height="13.500" fill="none" stroke="#3a2a1c" stroke-width="3" opacity=".6"/><rect x="-20.500" y="-11" width="41" height="13.500" fill="none" stroke="#5a563f" stroke-width="1.400"/><path d="M-19.500 3 C-19 8 -14 12 0 12 C14 12 19 8 19.500 3 C12 0 -12 0 -19.500 3 Z" fill="#4a4630"/><ellipse cx="0" cy="7.300" rx="15.500" ry="4.800" fill="url(#brass)"/><path d="M-15.500 6.500 C-10 1.500 10 1.500 15.500 6.500" fill="none" stroke="#9a9478" stroke-width=".900"/></g><g transform="translate(255.2 385.5) scale(1)"><path d="M-25.5 -2 L-21.5 -5 L-21.5 2 Z M25.5 -2 L21.5 -5 L21.500 2 Z" fill="#5c5842"/><path d="M-20 9 C-10 16 14 16 22 8" fill="none" stroke="#24120a" stroke-width="2.5" opacity=".45"/><rect x="-20.500" y="-11" width="41" height="13.500" fill="none" stroke="#3a2a1c" stroke-width="3" opacity=".6"/><rect x="-20.500" y="-11" width="41" height="13.500" fill="none" stroke="#5a563f" stroke-width="1.400"/><path d="M-19.500 3 C-19 8 -14 12 0 12 C14 12 19 8 19.500 3 C12 0 -12 0 -19.500 3 Z" fill="#4a4630"/><ellipse cx="0" cy="7.300" rx="15.500" ry="4.800" fill="url(#brass)"/><path d="M-15.500 6.500 C-10 1.500 10 1.500 15.500 6.500" fill="none" stroke="#9a9478" stroke-width=".900"/></g><path transform="translate(10.90 261.40) scale(0.01825 -0.01825)" d="M71 0V195Q126 316 227.5 431.0Q329 546 483 671Q631 791 690.5 869.0Q750 947 750 1022Q750 1206 565 1206Q475 1206 427.5 1157.5Q380 1109 366 1012L83 1028Q107 1224 229.5 1327.0Q352 1430 563 1430Q791 1430 913.0 1326.0Q1035 1222 1035 1034Q1035 935 996.0 855.0Q957 775 896.0 707.5Q835 640 760.5 581.0Q686 522 616.0 466.0Q546 410 488.5 353.0Q431 296 403 231H1057V0Z" fill="#170e0a"/><rect x="0" y="437.7" width="338.7" height="216" fill="#603f2e" filter="url(#woodf)"/><g filter="url(#wood)"><rect x="5.1" y="445.0" width="157.1" height="94.7" fill="#72513e"/><rect x="5.1" y="554.7" width="157.1" height="95.0" fill="#72513e"/><rect x="176.1" y="445.0" width="157.6" height="94.7" fill="#72513e"/><rect x="176.1" y="554.7" width="157.6" height="95.0" fill="#72513e"/></g><rect x="5.1" y="445.0" width="157.1" height="94.7" fill="none" stroke="#1a0c06" stroke-width="1.30" opacity=".85"/><rect x="6.6" y="446.5" width="154.1" height="91.7" fill="none" stroke="#2a140c" stroke-width="1.6" opacity=".22"/><rect x="5.1" y="554.7" width="157.1" height="95.0" fill="none" stroke="#1a0c06" stroke-width="1.30" opacity=".85"/><rect x="6.6" y="556.2" width="154.1" height="92.0" fill="none" stroke="#2a140c" stroke-width="1.6" opacity=".22"/><rect x="176.1" y="445.0" width="157.6" height="94.7" fill="none" stroke="#1a0c06" stroke-width="1.30" opacity=".85"/><rect x="177.6" y="446.5" width="154.6" height="91.7" fill="none" stroke="#2a140c" stroke-width="1.6" opacity=".22"/><rect x="176.1" y="554.7" width="157.6" height="95.0" fill="none" stroke="#1a0c06" stroke-width="1.30" opacity=".85"/><rect x="177.6" y="556.2" width="154.6" height="92.0" fill="none" stroke="#2a140c" stroke-width="1.6" opacity=".22"/><rect x="0.75" y="438.45" width="337.2" height="214.5" fill="none" stroke="#2a140c" stroke-width="1.5" opacity=".5"/><g transform="translate(84.5 495.0) scale(1)"><path d="M-25.5 -2 L-21.5 -5 L-21.5 2 Z M25.5 -2 L21.5 -5 L21.500 2 Z" fill="#5c5842"/><path d="M-20 9 C-10 16 14 16 22 8" fill="none" stroke="#24120a" stroke-width="2.5" opacity=".45"/><rect x="-20.500" y="-11" width="41" height="13.500" fill="none" stroke="#3a2a1c" stroke-width="3" opacity=".6"/><rect x="-20.500" y="-11" width="41" height="13.500" fill="none" stroke="#5a563f" stroke-width="1.400"/><path d="M-19.500 3 C-19 8 -14 12 0 12 C14 12 19 8 19.500 3 C12 0 -12 0 -19.500 3 Z" fill="#4a4630"/><ellipse cx="0" cy="7.300" rx="15.500" ry="4.800" fill="url(#brass)"/><path d="M-15.500 6.500 C-10 1.500 10 1.500 15.500 6.500" fill="none" stroke="#9a9478" stroke-width=".900"/></g><g transform="translate(84.5 605.0) scale(1)"><path d="M-25.5 -2 L-21.5 -5 L-21.5 2 Z M25.5 -2 L21.5 -5 L21.500 2 Z" fill="#5c5842"/><path d="M-20 9 C-10 16 14 16 22 8" fill="none" stroke="#24120a" stroke-width="2.5" opacity=".45"/><rect x="-20.500" y="-11" width="41" height="13.500" fill="none" stroke="#3a2a1c" stroke-width="3" opacity=".6"/><rect x="-20.500" y="-11" width="41" height="13.500" fill="none" stroke="#5a563f" stroke-width="1.400"/><path d="M-19.500 3 C-19 8 -14 12 0 12 C14 12 19 8 19.500 3 C12 0 -12 0 -19.500 3 Z" fill="#4a4630"/><ellipse cx="0" cy="7.300" rx="15.500" ry="4.800" fill="url(#brass)"/><path d="M-15.500 6.500 C-10 1.500 10 1.500 15.500 6.500" fill="none" stroke="#9a9478" stroke-width=".900"/></g><g transform="translate(255.2 495.0) scale(1)"><path d="M-25.5 -2 L-21.5 -5 L-21.5 2 Z M25.5 -2 L21.5 -5 L21.500 2 Z" fill="#5c5842"/><path d="M-20 9 C-10 16 14 16 22 8" fill="none" stroke="#24120a" stroke-width="2.5" opacity=".45"/><rect x="-20.500" y="-11" width="41" height="13.500" fill="none" stroke="#3a2a1c" stroke-width="3" opacity=".6"/><rect x="-20.500" y="-11" width="41" height="13.500" fill="none" stroke="#5a563f" stroke-width="1.400"/><path d="M-19.500 3 C-19 8 -14 12 0 12 C14 12 19 8 19.500 3 C12 0 -12 0 -19.500 3 Z" fill="#4a4630"/><ellipse cx="0" cy="7.300" rx="15.500" ry="4.800" fill="url(#brass)"/><path d="M-15.500 6.500 C-10 1.500 10 1.500 15.500 6.500" fill="none" stroke="#9a9478" stroke-width=".900"/></g><g transform="translate(255.2 605.0) scale(1)"><path d="M-25.5 -2 L-21.5 -5 L-21.5 2 Z M25.5 -2 L21.5 -5 L21.500 2 Z" fill="#5c5842"/><path d="M-20 9 C-10 16 14 16 22 8" fill="none" stroke="#24120a" stroke-width="2.5" opacity=".45"/><rect x="-20.500" y="-11" width="41" height="13.500" fill="none" stroke="#3a2a1c" stroke-width="3" opacity=".6"/><rect x="-20.500" y="-11" width="41" height="13.500" fill="none" stroke="#5a563f" stroke-width="1.400"/><path d="M-19.500 3 C-19 8 -14 12 0 12 C14 12 19 8 19.500 3 C12 0 -12 0 -19.500 3 Z" fill="#4a4630"/><ellipse cx="0" cy="7.300" rx="15.500" ry="4.800" fill="url(#brass)"/><path d="M-15.500 6.500 C-10 1.500 10 1.500 15.500 6.500" fill="none" stroke="#9a9478" stroke-width=".900"/></g><path transform="translate(11.84 479.88) scale(0.01831 -0.01831)" d="M1065 391Q1065 193 935.0 85.0Q805 -23 565 -23Q338 -23 204.0 81.5Q70 186 47 383L333 408Q360 205 564 205Q665 205 721.0 255.0Q777 305 777 408Q777 502 709.0 552.0Q641 602 507 602H409V829H501Q622 829 683.0 878.5Q744 928 744 1020Q744 1107 695.5 1156.5Q647 1206 554 1206Q467 1206 413.5 1158.0Q360 1110 352 1022L71 1042Q93 1224 222.0 1327.0Q351 1430 559 1430Q780 1430 904.5 1330.5Q1029 1231 1029 1055Q1029 923 951.5 838.0Q874 753 728 725V721Q890 702 977.5 614.5Q1065 527 1065 391Z" fill="#fff"/><rect x="0" y="215.4" width="338.7" height="4.6" fill="#7c7c7c"/><path d="M0 217.70000000000002 H338.7" stroke="#d6d6d4" stroke-width="4.6" stroke-dasharray="8 8" stroke-dashoffset="-7.6"/><rect x="0" y="435.4" width="338.7" height="4.6" fill="#7c7c7c"/><path d="M0 437.7 H338.7" stroke="#d6d6d4" stroke-width="4.6" stroke-dasharray="8 8" stroke-dashoffset="-7.6"/></svg>
<div style="left:303.5px;top:1029px;width:1259px;height:15px;background:#acacac;border:1px solid #3c3c3c;border-radius:2px;box-sizing:border-box;"></div>
<div style="left:1569px;top:110px;width:15px;height:916px;background:linear-gradient(90deg,#9c9c9c,#b2b2b2 40%,#a4a4a4);border:1px solid #3c3c3c;border-radius:2px;box-sizing:border-box;"></div>
<svg style="left:286px;top:1028px;" width="14" height="16" viewBox="0 0 14 16"><rect x="1" y="1.500" width="11.500" height="13" fill="none" stroke="#6a6a6a" stroke-width=".800" stroke-dasharray="1.500 1.500"/><path d="M.5 1.500 H13 M.5 14.500 H13" stroke="#e4e4e4" stroke-width="1.300" stroke-dasharray="2 1.300"/></svg>
<svg style="left:1564px;top:1026px;" width="22" height="22" viewBox="0 0 22 22"><path d="M11 1 L12 9.500 L20.500 11 L12 12.500 L11 21 L10 12.500 L1.500 11 L10 9.500 Z" fill="#fff"/><path d="M6.500 6.500 L15.500 15.500 M15.500 6.500 L6.500 15.500" stroke="#ddd" stroke-width=".6"/></svg>
<div class="t" style="left:291.5px;top:1053.5px;font-size:13px;line-height:18px;color:#8c8c8c;letter-spacing:0.567px;">-352.0, 1639.0</div>
<div style="left:392.5px;top:1049px;width:50.5px;height:28px;background:#8b8b8b;border:1px solid #a3a3a3;border-radius:3px;box-sizing:border-box;"></div>
<div class="t" style="left:399.7px;top:1053.5px;font-size:13px;line-height:18px;color:#222;letter-spacing:-0.887px;">px</div>
<svg style="left:421px;top:1056px;" width="16" height="12" viewBox="0 0 16 12"><path d="M2.500 3 L8 8.500 L13.500 3" fill="none" stroke="#111" stroke-width="2"/></svg>
<div style="left:443px;top:1049px;width:41px;height:28px;background:#8b8b8b;border:1px solid #9a9a9a;border-right:none;box-sizing:border-box;"></div>
<div style="left:445.5px;top:1056.5px;width:36px;height:14px;background:#c4c4c4;"></div>
<div class="t" style="left:446px;top:1055.5px;font-size:12px;line-height:16px;color:#222;letter-spacing:.35px;width:36.5px;overflow:hidden;">18,2 %</div>
<div style="left:483.5px;top:1049px;width:18.5px;height:28px;background:#8b8b8b;border:1px solid #a3a3a3;border-radius:3px;box-sizing:border-box;"></div>
<svg style="left:485px;top:1054px;" width="16" height="12" viewBox="0 0 16 12"><path d="M2.500 3 L8 8.500 L13.500 3" fill="none" stroke="#111" stroke-width="2"/></svg>
<svg style="left:503px;top:1067px;" width="18" height="11" viewBox="0 0 18 11"><ellipse cx="9" cy="6" rx="7" ry="4" fill="none" stroke="#b8b8b8" stroke-width="1.6"/></svg>
<div class="t" style="left:522.5px;top:1053.5px;font-size:13px;line-height:18px;color:#222;letter-spacing:0.772px;">Click-Drag to create a new selection</div>
<div style="left:0px;top:0px;width:1920px;height:23px;background:#fff;"></div>
<svg style="left:0px;top:0px;" width="22" height="23" viewBox="0 0 22 23"><rect x="2" y="3" width="8" height="16" fill="#5a3421"/><path d="M6 8 L8 5.500 L10 8 L13.500 7 L15.800 5 L15.800 9.500 L14 12 L9 12 L6.500 10 Z" fill="#5c5648"/><path d="M8 6 L8.800 9 L7 9.500 Z" fill="#fff"/><circle cx="10" cy="8.800" r="1.100" fill="#111"/><circle cx="12.800" cy="8.600" r="1" fill="#111"/><path d="M14 11.500 L17.500 13.500" stroke="#444" stroke-width=".800"/><path d="M10 12 L14 12 L13 11 Z" fill="#a8641e"/></svg>
<div class="t" style="left:23px;top:3.5px;font-size:12px;line-height:16px;color:#999;letter-spacing:-0.134px;">*P1260611-623-623-Coladj-With-Numbers-For-Colour-Comparison.xcf-8.0 (RGB color 8-bit gamma integer, GIMP built-in sRGB, 7 layers) 1869x3600 – GIMP</div>
<svg style="left:1795px;top:0px;" width="120" height="23" viewBox="0 0 120 23"><path d="M4 10.5 L14 10.5" stroke="#999" stroke-width="1"/><path d="M49.5 7.5 L56.5 7.5 L56.5 14.5 L49.5 14.5 Z M51.5 7.5 L51.5 5.5 L58.5 5.5 L58.5 12.5 L56.5 12.5" fill="none" stroke="#999" stroke-width="1"/><path d="M95 5 L105 15 M105 5 L95 15" stroke="#999" stroke-width="1"/></svg>
<div style="left:0px;top:23px;width:1920px;height:27px;background:#999;border-top:1px solid #8c8c8c;box-sizing:border-box;"></div>
<div class="t" style="left:7px;top:26.0px;font-size:14.5px;line-height:20px;color:#222;letter-spacing:.35px;">File</div>
<div class="t" style="left:42px;top:26.0px;font-size:14.5px;line-height:20px;color:#222;letter-spacing:.35px;">Edit</div>
<div class="t" style="left:79px;top:26.0px;font-size:14.5px;line-height:20px;color:#222;letter-spacing:.35px;">Select</div>
<div class="t" style="left:131px;top:26.0px;font-size:14.5px;line-height:20px;color:#222;letter-spacing:.35px;">View</div>
<div class="t" style="left:175px;top:26.0px;font-size:14.5px;line-height:20px;color:#222;letter-spacing:.35px;">Image</div>
<div class="t" style="left:228px;top:26.0px;font-size:14.5px;line-height:20px;color:#222;letter-spacing:.35px;">Layer</div>
<div class="t" style="left:276px;top:26.0px;font-size:14.5px;line-height:20px;color:#222;letter-spacing:.35px;">Colors</div>
<div class="t" style="left:329px;top:26.0px;font-size:14.5px;line-height:20px;color:#222;letter-spacing:.35px;">Tools</div>
<div class="t" style="left:374px;top:26.0px;font-size:14.5px;line-height:20px;color:#222;letter-spacing:.35px;">Filters</div>
<div class="t" style="left:426px;top:26.0px;font-size:14.5px;line-height:20px;color:#222;letter-spacing:.35px;">Windows</div>
<div class="t" style="left:497px;top:26.0px;font-size:14.5px;line-height:20px;color:#222;letter-spacing:.35px;">Help</div>
<div style="left:0px;top:50px;width:280px;height:1028px;background:#767676;"></div>
<svg style="left:0px;top:50px;" width="280" height="36" viewBox="0 0 280 36"><path d="M14 8 L262 8 L258 34 L14 34 Z" fill="#707070"/><path d="M14 34 C14 14 34 8 50 12 C64 16 70 26 72 34 Z" fill="#7b7b7b"/><path d="M28 34 C28 24 50 22 52 34 Z" fill="#737373"/><circle cx="104" cy="18" r="24" fill="#7b7b7b"/><circle cx="163" cy="21" r="27" fill="#7b7b7b"/><circle cx="104" cy="19" r="9.500" fill="#6e6e6e"/><circle cx="163" cy="22" r="15.500" fill="#6e6e6e"/><path d="M190 8 L262 8 L258 34 L186 34 Z" fill="#727272"/></svg>
<svg style="left:7px;top:91px;" width="32" height="32" viewBox="0 0 32 32"><path d="M16 1 L22 8 L18 8 L18 14 L24 14 L24 10 L31 16 L24 22 L24 18 L18 18 L18 24 L22 24 L16 31 L10 24 L14 24 L14 18 L8 18 L8 22 L1 16 L8 10 L8 14 L14 14 L14 8 L10 8 Z" fill="url(#gB)" stroke="#204a87" stroke-width="1.4" stroke-linejoin="round"/></svg>
<svg style="left:53px;top:91px;" width="32" height="32" viewBox="0 0 32 32"><rect x="1" y="2" width="2.2" height="28" fill="#f5a623"/><rect x="3.5" y="6" width="19" height="6" rx="1" fill="#729fcf" opacity=".55"/><rect x="5" y="7.5" width="16" height="3" fill="#204a87"/>
<rect x="3.5" y="18" width="28" height="9" rx="1" fill="#cfe0f5"/><rect x="5" y="20" width="25" height="5" fill="#204a87"/></svg>
<svg style="left:99px;top:91px;" width="32" height="32" viewBox="0 0 32 32"><rect x="1" y="6" width="30" height="21" fill="#000"/><rect x="1" y="6" width="30" height="21" fill="none" stroke="#fff" stroke-width="2.2" stroke-dasharray="2 2" /><rect x="2.6" y="7.6" width="26.8" height="17.8" fill="#d3d7cf"/></svg>
<svg style="left:145px;top:91px;" width="32" height="32" viewBox="0 0 32 32"><ellipse cx="16" cy="17" rx="15.5" ry="11.5" fill="#000"/><ellipse cx="16" cy="17" rx="14.6" ry="10.6" fill="none" stroke="#fff" stroke-width="2" stroke-dasharray="2 2.1"/><ellipse cx="16" cy="17" rx="13" ry="9" fill="#d3d7cf"/></svg>
<div style="left:184.5px;top:86.5px;width:45px;height:41px;background:#8b8b8b;border:1px solid #a9a9a9;border-radius:4px;box-sizing:border-box;"></div>
<svg style="left:191px;top:91px;" width="32" height="32" viewBox="0 0 32 32"><g fill="none" stroke-linecap="round"><path d="M9.500 17.500 C3 12 9 3 19 3 C30 3 32 11 27 15.500 C22 20 13 19.500 8.500 16.500 M8.500 16.500 C15 19.500 18.500 23 16 28.500 C15 30.500 12 30.500 10.500 30" stroke="#9c9c9c" stroke-width="3.600"/><path d="M9.500 17.500 C3 12 9 3 19 3 C30 3 32 11 27 15.500 C22 20 13 19.500 8.500 16.500 M8.500 16.500 C15 19.500 18.500 23 16 28.500 C15 30.500 12 30.500 10.500 30" stroke="#c9c9c9" stroke-width="1.500"/><path d="M9.500 17.500 C3 12 9 3 19 3 C30 3 32 11 27 15.500 C22 20 13 19.500 8.500 16.500 M8.500 16.500 C15 19.500 18.500 23 16 28.500" stroke="#808080" stroke-width=".500"/></g><circle cx="10" cy="18" r="2.400" fill="#8f8f8f" stroke="#c4c4c4" stroke-width="1"/></svg>
<svg style="left:237px;top:91px;" width="32" height="32" viewBox="0 0 32 32"><path d="M14 2 L27 2 M15 2 L15 9" stroke="#f57900" stroke-width="2" stroke-dasharray="3.500 1.500" fill="none"/>
<path d="M8 5 L17.500 21" stroke="#fff" stroke-width="3.600" stroke-linecap="round"/><path d="M23.500 5 L14 21" stroke="#fff" stroke-width="3.600" stroke-linecap="round"/>
<path d="M8 5 L17.500 21 M23.500 5 L14 21" stroke="#d0d0d0" stroke-width=".600" fill="none"/>
<ellipse cx="9" cy="25.500" rx="5.800" ry="4" transform="rotate(-35 9 25.500)" fill="none" stroke="#204a87" stroke-width="3.600"/><ellipse cx="23" cy="25.500" rx="5.800" ry="4" transform="rotate(35 23 25.500)" fill="none" stroke="#204a87" stroke-width="3.600"/>
<ellipse cx="9" cy="25.500" rx="5.800" ry="4" transform="rotate(-35 9 25.500)" fill="none" stroke="#4a7ab8" stroke-width="2"/><ellipse cx="23" cy="25.500" rx="5.800" ry="4" transform="rotate(35 23 25.500)" fill="none" stroke="#4a7ab8" stroke-width="2"/>
<path d="M12.500 21.500 L16 17.500 L19.500 21.500 Z" fill="#3465a4"/></svg>
<svg style="left:7px;top:133px;" width="32" height="32" viewBox="0 0 32 32"><rect x="9" y="1" width="23" height="23" fill="#000"/><rect x="12" y="3.5" width="17.5" height="17.5" fill="#eeeeec"/><rect x="1" y="7" width="26" height="25" fill="#000"/><rect x="1" y="7" width="26" height="25" fill="none" stroke="#fff" stroke-width="2.2" stroke-dasharray="2 2" /><rect x="2.6" y="8.6" width="22.8" height="21.8" fill="#a9aba6"/><path d="M7 27 L7 21 C7 16 19 16 19 21 L19 27 Z" fill="#73d216"/><circle cx="13" cy="14.5" r="4.8" fill="#fcaf3e"/></svg>
<svg style="left:53px;top:133px;" width="32" height="32" viewBox="0 0 32 32"><circle cx="9" cy="10" r="10" fill="url(#gGlow)"/><path d="M10 11 L30 30" stroke="#555" stroke-width="3.6" stroke-linecap="round" opacity=".55"/><path d="M10 11 L29.5 29.5" stroke="#b9bea4" stroke-width="2.2" stroke-linecap="round"/><circle cx="9" cy="10" r="2.2" fill="#fff"/></svg>
<svg style="left:99px;top:133px;" width="32" height="32" viewBox="0 0 32 32"><rect x="6" y="1" width="22" height="18" fill="#000"/><rect x="6" y="1" width="22" height="18" fill="none" stroke="#fff" stroke-width="2.2" stroke-dasharray="2 2" /><rect x="7.6" y="2.6" width="18.8" height="14.8" fill="#babdb6"/><circle cx="17" cy="10" r="6" fill="url(#gRed)"/><circle cx="7" cy="26.5" r="5.5" fill="url(#gGrn)"/><circle cx="26" cy="26.5" r="5.5" fill="url(#gBlu)"/></svg>
<svg style="left:145px;top:133px;" width="32" height="32" viewBox="0 0 32 32"><path d="M6 2 L6 26 L30 26" fill="none" stroke="#729fcf" stroke-width="4"/><path d="M2 7 L27 7 L27 31" fill="none" stroke="#3465a4" stroke-width="4"/><path d="M6 2 L6 26 L30 26" fill="none" stroke="#204a87" stroke-width=".6" opacity=".5"/></svg>
<svg style="left:191px;top:133px;" width="32" height="32" viewBox="0 0 32 32"><rect x="1" y="2" width="30" height="8.5" fill="#729fcf" stroke="#3465a4" stroke-width="1.6"/><path d="M17 30 L17 18 L27 4 L27 30 Z" fill="#4a7ab8" stroke="#204a87" stroke-width="1.6"/><path d="M4 17 L4 22 L9 22 M7 19.5 L10 22 L7 24.5" fill="none" stroke="#fff" stroke-width="1.8"/></svg>
<svg style="left:237px;top:133px;" width="32" height="32" viewBox="0 0 32 32"><rect x="3" y="4" width="16" height="9" fill="#729fcf" stroke="#3465a4" stroke-width="1.8"/><rect x="12" y="14" width="13" height="13" transform="rotate(40 18.5 20.5)" fill="#3465a4" stroke="#204a87" stroke-width="2"/>
<path d="M23 4 C27 4 28 7 27.5 10 M24.5 8.5 L27.5 12 L30.5 8.5" fill="none" stroke="#fff" stroke-width="2.4"/><path d="M8 29 C4 29 3 26 3.5 23 M.5 24.5 L3.5 21 L6.5 24.5" fill="none" stroke="#fff" stroke-width="2.4"/></svg>
<svg style="left:7px;top:175px;" width="32" height="32" viewBox="0 0 32 32"><rect x="1" y="1" width="11" height="11" fill="#729fcf" stroke="#3465a4" stroke-width="1.4"/><rect x="11" y="13" width="21" height="19" fill="#204a87" stroke="#4a7ab8" stroke-width="1.6"/><path d="M11 12 L19 20 M19 14.5 L19 20.5 L13 20.5" fill="none" stroke="#fff" stroke-width="2.2"/></svg>
<svg style="left:53px;top:175px;" width="32" height="32" viewBox="0 0 32 32"><path d="M5 1 L22 1 L22 20 L5 20 Z" fill="#3465a4" stroke="#204a87" stroke-width="1.4"/><path d="M7 3 L24 3 L31 20 L14 20 Z" fill="#729fcf" stroke="#cfe0f5" stroke-width="1" opacity=".75"/><path d="M1 26 L8 26 M5 23 L9 26 L5 29" fill="none" stroke="#fff" stroke-width="2.4"/></svg>
<svg style="left:99px;top:175px;" width="32" height="32" viewBox="0 0 32 32"><path d="M1 5 L16 5 L16 28 L1 28 Z" fill="#3465a4" stroke="#204a87" stroke-width="1.5"/><path d="M17 5 L31 2 L31 31 L17 28 Z" fill="#729fcf" stroke="#3465a4" stroke-width="1.5"/><path d="M13 17 L5 17 M8 13.5 L4.5 17 L8 20.5" fill="none" stroke="#fff" stroke-width="2.4"/><path d="M20 17 L28 17 M25 13.5 L28.5 17 L25 20.5" fill="none" stroke="#fff" stroke-width="2.4"/></svg>
<svg style="left:145px;top:175px;" width="32" height="32" viewBox="0 0 32 32"><g fill="none" stroke="#3465a4" stroke-width="2.2" stroke-linejoin="round"><rect x="12" y="11" width="19" height="19"/><path d="M2 3 L21 3 L21 21 L2 21 Z" opacity=".85"/><path d="M2 3 L12 11 M21 3 L31 11 M2 21 L12 30 M21 21 L31 30"/></g></svg>
<svg style="left:191px;top:175px;" width="32" height="32" viewBox="0 0 32 32"><path d="M3 1 L29 6 L29 26 L3 31 Z" fill="#3465a4" stroke="#204a87" stroke-width="1.2"/><g fill="#729fcf"><path d="M6 6 L11 7 L11 12 L6 12Z"/><path d="M14 7.5 L19 8.3 L19 12.5 L14 12.5Z"/><path d="M22 9 L26 9.7 L26 13 L22 13Z"/><rect x="6" y="14.5" width="5" height="5"/><rect x="14" y="14.5" width="5" height="4.5"/><rect x="22" y="15" width="4" height="4"/><path d="M6 22 L11 21.5 L11 26.5 L6 27.5Z"/><path d="M14 21.3 L19 21 L19 25 L14 25.8Z"/><path d="M22 21 L26 20.8 L26 24 L22 24.5Z"/></g></svg>
<svg style="left:237px;top:175px;" width="32" height="32" viewBox="0 0 32 32"><path d="M5 5 L26 5 L30 28 L9 24 Z" fill="#729fcf" stroke="#9db8dc" stroke-width="1.2" opacity=".8"/><path d="M5 5 L24 5 L22 27 L6 22 Z" fill="#3465a4" stroke="#204a87" stroke-width="1.4" opacity=".85"/><circle cx="5" cy="5" r="3.8" fill="#729fcf" stroke="#204a87" stroke-width="1.4"/><circle cx="25" cy="4.5" r="3.8" fill="#729fcf" stroke="#204a87" stroke-width="1.4"/><circle cx="22" cy="28" r="3.8" fill="#729fcf" stroke="#204a87" stroke-width="1.4"/></svg>
<svg style="left:7px;top:217px;" width="32" height="32" viewBox="0 0 32 32"><path d="M5 9 L28 5 L28 27 L17 16 L5 28 Z" fill="none" stroke="#000" stroke-width="3.2" stroke-linejoin="round"/><path d="M5 9 L28 5 L28 27 L17 16 L5 28 Z" fill="none" stroke="#fff" stroke-width="1.4" stroke-linejoin="round"/><circle cx="5" cy="9" r="4" fill="#729fcf" stroke="#204a87" stroke-width="1.6"/><path d="M3 9 L7 9" stroke="#cfe0f5" stroke-width="1"/><circle cx="28" cy="5" r="4" fill="#729fcf" stroke="#204a87" stroke-width="1.6"/><path d="M26 5 L30 5" stroke="#cfe0f5" stroke-width="1"/><circle cx="28" cy="27" r="4" fill="#729fcf" stroke="#204a87" stroke-width="1.6"/><path d="M26 27 L30 27" stroke="#cfe0f5" stroke-width="1"/><circle cx="17" cy="16" r="4" fill="#729fcf" stroke="#204a87" stroke-width="1.6"/><path d="M15 16 L19 16" stroke="#cfe0f5" stroke-width="1"/><circle cx="5" cy="28" r="4" fill="#729fcf" stroke="#204a87" stroke-width="1.6"/><path d="M3 28 L7 28" stroke="#cfe0f5" stroke-width="1"/></svg>
<svg style="left:53px;top:217px;" width="32" height="32" viewBox="0 0 32 32"><path d="M1 31 L1 20 C8 18 10 14 12 9 C15 2 24 0 28 5 C30 8 27 12 24 11 C21 10 22 7 24 7 C20 6 18 10 20 14 C22 18 26 19 31 19 L31 31 Z" fill="url(#gB)" stroke="#000" stroke-width="1.3"/><path d="M1.8 20.5 L1.8 30.2 L30 30.2" fill="none" stroke="#fff" stroke-width="1.1"/></svg>
<svg style="left:99px;top:217px;" width="32" height="32" viewBox="0 0 32 32"><path d="M3 22 L3 13 C3 10 5 9 8 9 L13 9" fill="none" stroke="#204a87" stroke-width="4.5" stroke-linecap="round"/><path d="M3 22 L3 13 C3 10 5 9 8 9 L13 9" fill="none" stroke="#3465a4" stroke-width="2.4" stroke-linecap="round"/><path d="M17 10 C15 3 22 -1 25 3 C27 6 27 9 26 13" fill="none" stroke="#555" stroke-width="1.8"/><path d="M8 13 L22 6 L31 22 L17 30 Z" fill="#eeeeec" stroke="#555" stroke-width="1.6" stroke-linejoin="round"/><path d="M11 14 L21 9 L28 21 L18 27 Z" fill="#fff" opacity=".7"/><circle cx="18" cy="14" r="3" fill="none" stroke="#666" stroke-width="1.6"/></svg>
<svg style="left:145px;top:217px;" width="32" height="32" viewBox="0 0 32 32"><rect x="6" y="6" width="20" height="20" transform="rotate(45 16 16)" fill="#75507b" stroke="#555" stroke-width="1.6"/><path d="M4 5 L28 28" stroke="#555" stroke-width="1.6"/><rect x="1.5" y="3" width="4" height="4" fill="#fff" stroke="#555" stroke-width="1"/><circle cx="28.5" cy="28.5" r="2.4" fill="#fff" stroke="#555" stroke-width="1"/></svg>
<svg style="left:191px;top:217px;" width="32" height="32" viewBox="0 0 32 32"><path d="M30 1 C27 2 20 10 17 16 L21 19 C25 13 30 5 30 1 Z" fill="#c17d11" stroke="#8f5902" stroke-width="1"/><path d="M28 3 C24 8 21 12 19 16" stroke="#f5b04a" stroke-width="1.4" fill="none"/><path d="M17 16 L13 22 L17 25 L21 19 Z" fill="#d3d7cf" stroke="#666" stroke-width=".8"/><path d="M13 22 C9 22 8 27 2 31 C9 32 16 30 17 25 Z" fill="#111"/></svg>
<svg style="left:237px;top:217px;" width="32" height="32" viewBox="0 0 32 32"><path d="M25 3 L30 8 L10 28 L5 23 Z" fill="#f5a02a" stroke="#ce7b0c" stroke-width="1"/><path d="M26.5 4.5 L7 24" stroke="#fcd28a" stroke-width="1.6"/><path d="M25 3 C27 0 32 3 30 8 Z" fill="#ef2929"/><path d="M5 23 L10 28 L2.5 31 Z" fill="#e9c78f"/><path d="M2.5 31 L3.6 28 L5.4 29.9 Z" fill="#222"/></svg>
<svg style="left:7px;top:259px;" width="32" height="32" viewBox="0 0 32 32"><path d="M29 2 L31 5 L20 17 L17 14 Z" fill="#ef2929" stroke="#a40000" stroke-width=".8"/><path d="M18 15 L20 17 L12 25 C9 28 5 28 3 30 L2 29 C5 26 5 23 8 20 L16 14 Z" fill="#eeeeec" stroke="#555" stroke-width="1"/><path d="M10 6 L17 6 L16 11 L14 13 L14 17 L12 17 L12 13 L11 11 Z" fill="none" stroke="#2e3436" stroke-width="1.1"/><path d="M12.5 11 L14.5 11 L13.5 16 Z" fill="#3465a4"/><path d="M16 24 C18 28 22 24 28 27" fill="none" stroke="#222" stroke-width="1"/><circle cx="2" cy="30.5" r="1.2" fill="#ddd"/></svg>
<svg style="left:53px;top:259px;" width="32" height="32" viewBox="0 0 32 32"><path d="M3 31 L5 18 L10 16 L10 20 L20 20 L22 24 L24 31 Z" fill="#204a87" stroke="#3465a4" stroke-width="1"/><path d="M25 2 C28 0 32 3 31 6 L17 20 L12 17 Z" fill="#111"/><path d="M12 17 L17 20 L9 26 L4 29 Z" fill="#e9b96e" stroke="#8f5902" stroke-width=".8"/><path d="M5 28 L12 21" stroke="#222" stroke-width=".8"/></svg>
<svg style="left:99px;top:259px;" width="32" height="32" viewBox="0 0 32 32"><rect x="1" y="2" width="26" height="24" fill="#fff" stroke="#bbb" stroke-width="1.2"/><path d="M4 6 L5 21 L6.5 6 L8 22 L9.5 7 L11 22 L12.5 9 L14 21 L15 12 L16.5 19 M5 22 C10 16 14 14 19 16" fill="none" stroke="#5b8bd0" stroke-width="1.5"/><path d="M19 18 L30 28" stroke="#c17d11" stroke-width="3" stroke-linecap="round"/><circle cx="18" cy="17.5" r="3" fill="#8fb0de" stroke="#3465a4" stroke-width="1"/></svg>
<svg style="left:145px;top:259px;" width="32" height="32" viewBox="0 0 32 32"><path d="M17 2 L28 2 L32 8 L22 20 L11 14 Z" fill="#5d9ad3" transform="rotate(8 20 10)"/><path d="M11 13 L22 19 L14 29 L5 24 Z" fill="#ee7b74"/><path d="M5 24 L14 29 L12 31 L4 27 Z" fill="#f3a59f"/><path d="M1 31 L6 31 M15 31 L30 31" stroke="#555" stroke-width="1.6"/></svg>
<svg style="left:191px;top:259px;" width="32" height="32" viewBox="0 0 32 32"><g transform="translate(0 1) scale(1)">
<path d="M10.500 9.500 C13 12 13.500 15 11 19.500 L21 19.500 C18.500 15 19 12 21.500 9.500 Z" fill="url(#gStampH)"/>
<ellipse cx="16" cy="6.800" rx="6.800" ry="5.800" fill="url(#gKnob)"/>
<path d="M4 17.500 L28 17.500 L31 22 L31 29 L1 29 L1 22 Z" fill="url(#gT)" stroke="#7a5a12" stroke-width="1"/>
<rect x="1.500" y="21.800" width="29" height="1.500" fill="#5c4a1a" opacity=".8"/><rect x="1" y="28.300" width="30" height="1.700" fill="#1a1a1a"/></g></svg>
<svg style="left:237px;top:259px;" width="32" height="32" viewBox="0 0 32 32"><path d="M19 5 L27 5 L31 31 L12 31 Z" fill="#3465a4" stroke="#204a87" stroke-width="1.4"/><path d="M20.5 9 L26 9 L28.5 28 L15 28 Z" fill="none" stroke="#204a87" stroke-width="1"/><g transform="translate(0 0) scale(0.68)">
<path d="M10.500 9.500 C13 12 13.500 15 11 19.500 L21 19.500 C18.500 15 19 12 21.500 9.500 Z" fill="url(#gStampH)"/>
<ellipse cx="16" cy="6.800" rx="6.800" ry="5.800" fill="url(#gKnob)"/>
<path d="M4 17.500 L28 17.500 L31 22 L31 29 L1 29 L1 22 Z" fill="url(#gT)" stroke="#7a5a12" stroke-width="1"/>
<rect x="1.500" y="21.800" width="29" height="1.500" fill="#5c4a1a" opacity=".8"/><rect x="1" y="28.300" width="30" height="1.700" fill="#1a1a1a"/></g></svg>
<svg style="left:7px;top:301px;" width="32" height="32" viewBox="0 0 32 32"><g transform="rotate(-40 16 16)"><rect x="-2" y="10.500" width="36" height="11.500" rx="5.500" fill="url(#gT)" stroke="#8f6b1a" stroke-width="1"/></g><g transform="rotate(38 16 16)"><rect x="-2" y="10" width="36" height="12.500" rx="6" fill="url(#gT)" stroke="#8f6b1a" stroke-width="1"/><rect x="10" y="11" width="12" height="10.500" fill="#d9ae4a" stroke="#b8902e" stroke-width=".600"/></g><g fill="#5a4a20"><circle cx="13.500" cy="13.500" r="1.400"/><circle cx="18.500" cy="13" r="1.400"/><circle cx="13" cy="18.500" r="1.400"/><circle cx="18.500" cy="18.500" r="1.400"/></g></svg>
<svg style="left:53px;top:301px;" width="32" height="32" viewBox="0 0 32 32"><path d="M20 3 C25 4 27 10 25 17 C23 23 17 25 12 24 L6 28 C3 29 3 26 5 25 L10 20 C5 19 4 14 7 11 C11 6 15 4 20 3 Z" fill="#f3d6c3" stroke="#b35f0e" stroke-width="1.5" stroke-linejoin="round"/><path d="M9 12 L13 17 M12 10 L16 15 M15 8 L19 13 M12 24 C15 22 17 20 21 20" fill="none" stroke="#c98a5c" stroke-width="1"/><path d="M19 2 L27 5 L26 9 L18 5 Z" fill="#eee" opacity=".8"/></svg>
<svg style="left:99px;top:301px;" width="32" height="32" viewBox="0 0 32 32"><path d="M16 1 C17 8 28 15 28 22 C28 28 23 32 16 32 C9 32 4 28 4 22 C4 15 15 8 16 1 Z" fill="url(#gDrop)" stroke="#2a5594" stroke-width=".8"/></svg>
<svg style="left:145px;top:301px;" width="32" height="32" viewBox="0 0 32 32"><path d="M20 13 L31 2" stroke="#555" stroke-width="3.4" stroke-linecap="round"/><path d="M20 13 L31 2" stroke="#d3d7cf" stroke-width="1.6" stroke-linecap="round"/><circle cx="12" cy="19" r="10" fill="#2e3436" stroke="#888a85" stroke-width="1"/></svg>
<svg style="left:191px;top:301px;" width="32" height="32" viewBox="0 0 32 32"><path d="M4.5 4 L4.5 28 M4.5 16 C8 8 14 2 22 2 C27 2 27 6 27 9" fill="none" stroke="#222" stroke-width="2.2"/><path d="M4.5 4 L4.5 28 M4.5 16 C8 8 14 2 22 2 C27 2 27 6 27 9" fill="none" stroke="#fff" stroke-width=".9"/><rect x="2" y="1" width="5.5" height="5.5" fill="#fff" stroke="#222" stroke-width=".8"/><rect x="2" y="26" width="5.5" height="5.5" fill="#fff" stroke="#222" stroke-width=".8"/><circle cx="4.7" cy="16" r="2.6" fill="#fff" stroke="#222" stroke-width=".8"/><rect x="24.5" y="7" width="4.5" height="6" fill="#888"/><rect x="23" y="12" width="7.5" height="5" fill="#edd400" stroke="#c4a000" stroke-width=".8"/><path d="M20 31 L20 21 C20 18 23 17 23 17 L30.5 17 C30.5 17 33 18 33 21 L33 31 Z" fill="#3465a4" stroke="#204a87" stroke-width="1"/></svg>
<svg style="left:237px;top:301px;" width="32" height="32" viewBox="0 0 32 32"><path d="M11 1 L21 1 L32 31 L24 31 L22 24 L10 24 L8 31 L0 31 Z M16 8 L12 19 L20 19 Z" fill="#1a1a1a" stroke="#000" stroke-width=".8"/><path d="M12 2.5 L20 2.5 L22 8" fill="none" stroke="#666" stroke-width="1"/></svg>
<svg style="left:7px;top:343px;" width="32" height="32" viewBox="0 0 32 32"><path d="M22 5 L27 10 L11 26 L7 25 L6 21 Z" fill="#d8e4f2" stroke="#555" stroke-width="1"/><path d="M21 8 L24 11 L12 23 L9 20 Z" fill="#729fcf"/><path d="M20 6 L26 12 L31 7 C33 4 28 -1 25 1 Z" fill="#204a87" stroke="#173a70" stroke-width="1"/><circle cx="27" cy="5" r="1.6" fill="#729fcf"/><ellipse cx="9" cy="29" rx="7.5" ry="2.8" fill="#3465a4" stroke="#204a87" stroke-width="1"/><ellipse cx="7" cy="28.5" rx="2.5" ry="1.2" fill="#cfe0f5"/></svg>
<svg style="left:53px;top:343px;" width="32" height="32" viewBox="0 0 32 32"><path d="M16 4 L2 31 M16 4 L30 31" stroke="#1a1a1a" stroke-width="2.8"/><path d="M16 4 L3 29 M16 4 L29 29" stroke="#3465a4" stroke-width="1.6"/><path d="M5 22 C11 27 22 26 29 17 L31 21 C24 29 11 30 4 25 Z" fill="#3465a4" stroke="#204a87" stroke-width=".8"/><circle cx="16" cy="4" r="3.6" fill="#729fcf" stroke="#204a87" stroke-width="1.4"/><circle cx="16" cy="4" r="1.2" fill="#fff"/></svg>
<svg style="left:99px;top:343px;" width="32" height="32" viewBox="0 0 32 32"><path d="M20 21 L29 30" stroke="#222" stroke-width="5" stroke-linecap="round"/><path d="M21 22 L28 29" stroke="#8f5902" stroke-width="1.6" stroke-linecap="round"/><circle cx="13" cy="14" r="10.5" fill="none" stroke="#204a87" stroke-width="5"/><circle cx="13" cy="14" r="10.5" fill="none" stroke="#4a7ab8" stroke-width="3"/><circle cx="13" cy="14" r="8" fill="none" stroke="#a9c4e6" stroke-width="1.4"/></svg>
<svg style="left:145px;top:343px;" width="32" height="32" viewBox="0 0 32 32"><g transform="translate(-1 0) scale(0.66)">
<path d="M10.500 9.500 C13 12 13.500 15 11 19.500 L21 19.500 C18.500 15 19 12 21.500 9.500 Z" fill="url(#gStampH)"/>
<ellipse cx="16" cy="6.800" rx="6.800" ry="5.800" fill="url(#gKnob)"/>
<path d="M4 17.500 L28 17.500 L31 22 L31 29 L1 29 L1 22 Z" fill="url(#gT)" stroke="#7a5a12" stroke-width="1"/>
<rect x="1.500" y="21.800" width="29" height="1.500" fill="#5c4a1a" opacity=".8"/><rect x="1" y="28.300" width="30" height="1.700" fill="#1a1a1a"/></g><g transform="translate(10 10) scale(0.66)">
<path d="M10.500 9.500 C13 12 13.500 15 11 19.500 L21 19.500 C18.500 15 19 12 21.500 9.500 Z" fill="url(#gStampH)"/>
<ellipse cx="16" cy="6.800" rx="6.800" ry="5.800" fill="url(#gKnob)"/>
<path d="M4 17.500 L28 17.500 L31 22 L31 29 L1 29 L1 22 Z" fill="url(#gT)" stroke="#7a5a12" stroke-width="1"/>
<rect x="1.500" y="21.800" width="29" height="1.500" fill="#5c4a1a" opacity=".8"/><rect x="1" y="28.300" width="30" height="1.700" fill="#1a1a1a"/></g></svg>
<div style="left:136px;top:398px;width:24px;height:24px;background:#fff;border:1px solid #000;box-sizing:border-box;"></div>
<div style="left:120px;top:384.5px;width:24px;height:23.5px;background:#000;border:1px solid #fff;outline:1px solid #000;outline-offset:-2px;box-sizing:border-box;"></div>
<svg style="left:148px;top:384px;" width="14" height="13" viewBox="0 0 14 13"><path d="M2 3 L8 3 L8 9 M4 1 L1.5 3 L4 5.3 M6 7 L8 10 L10.2 7" fill="none" stroke="#fff" stroke-width="1.3"/><path d="M2.6 3.7 L7.4 3.7 L7.4 9" fill="none" stroke="#444" stroke-width=".5"/></svg>
<svg style="left:120px;top:410px;" width="13" height="13" viewBox="0 0 13 13"><rect x="5" y="5" width="7.5" height="7.5" fill="#fff" stroke="#ddd" stroke-width=".6"/><rect x=".5" y=".5" width="7" height="7" fill="#000" stroke="#555" stroke-width=".8"/></svg>
<div style="left:0px;top:460px;width:281px;height:1px;background:#9c9c9c;"></div>
<div style="left:279.5px;top:460px;width:1px;height:618px;background:#a2a2a2;"></div>
<div style="left:0px;top:429px;width:32px;height:32px;background:#8a8a8a;border:1px solid #a0a0a0;border-bottom:none;box-sizing:border-box;"></div>
<div style="left:32px;top:431px;width:29px;height:29px;border:1px solid #8e8e8e;border-bottom:none;border-left:none;box-sizing:border-box;"></div>
<div style="left:61px;top:431px;width:30px;height:29px;border:1px solid #8e8e8e;border-bottom:none;border-left:none;box-sizing:border-box;"></div>
<div style="left:91px;top:431px;width:32px;height:29px;border:1px solid #8e8e8e;border-bottom:none;border-left:none;box-sizing:border-box;"></div>
<div style="left:123px;top:431px;width:31px;height:29px;border:1px solid #8e8e8e;border-bottom:none;border-left:none;box-sizing:border-box;"></div>
<svg style="left:3px;top:432px;" width="26" height="27" viewBox="0 0 26 27"><path d="M6 16 L3 26 M20 16 L23 26 M13 2 L13 6 M4 21 L22 21" stroke="#d49a35" stroke-width="1.8" fill="none"/><rect x="1.5" y="5" width="23" height="12.5" fill="#f4f4f2" stroke="#c8c8c4" stroke-width="1"/><rect x="3" y="17.5" width="20" height="1.6" fill="#c88a2a"/></svg>
<svg style="left:33px;top:432px;" width="27" height="27" viewBox="0 0 27 27"><path d="M22 3 L24.5 5.5 L9 24 L5 25.5 L6 21.5 Z" fill="#c9c9c9" stroke="#666" stroke-width="1"/><path d="M21 6 L8 22" stroke="#fff" stroke-width="1.2"/><circle cx="7" cy="7.5" r="5.3" fill="#3465a4" stroke="#dfe8f5" stroke-width="1.2"/><rect x="6.2" y="6.5" width="1.8" height="4" fill="#fff"/><circle cx="7.1" cy="4.6" r="1" fill="#fff"/></svg>
<svg style="left:63px;top:432px;" width="27" height="27" viewBox="0 0 27 27"><g fill="none" stroke="#edd400" stroke-width="2.6" stroke-linejoin="round"><path d="M10 6 L21 6 C24 6 24 13 21 13 L18 13"/><path d="M13 2.5 L9 6 L13 9.5"/><path d="M7 18 L16 18 C19 18 19 25 16 25 L13 25"/><path d="M9 13.5 L4 18 L9 22.5"/></g></svg>
<div style="left:94px;top:433px;width:26px;height:25.5px;background:#000;"></div>
<div style="left:95.5px;top:434.5px;width:23px;height:22.5px;background:#fff;"></div>
<div style="left:101.5px;top:434.5px;width:11px;height:22.5px;background:#6a4432;"></div>
<svg style="left:125px;top:432px;" width="28" height="27" viewBox="0 0 28 27"><path d="M14 3 L15 12 L24 13.5 L15 15 L14 24 L13 15 L4 13.5 L13 12 Z" fill="#fff"/><path d="M8 8 L20 19 M20 8 L8 19" stroke="#ddd" stroke-width=".6"/></svg>
<svg style="left:263px;top:439px;" width="12" height="12" viewBox="0 0 12 12"><rect x=".7" y=".7" width="10.6" height="10.6" rx="1.5" fill="#ddd" stroke="#222" stroke-width="1.2"/><path d="M8.5 3 L8.5 9 L3.5 6 Z" fill="#222"/><path d="M8.2 4 L8.2 8 L5 6Z" fill="#eee"/></svg>
<div class="t" style="left:3.6px;top:460.5px;font-size:13px;line-height:18px;color:#222;font-weight:bold;letter-spacing:0.155px;">Free Select</div>
<div class="t" style="left:3.6px;top:485.5px;font-size:13px;line-height:18px;color:#222;letter-spacing:-0.540px;">Mode:</div>
<div style="left:40px;top:479.5px;width:32px;height:31px;background:#8c8c8c;border:1px solid #a8a8a8;border-radius:3px;box-sizing:border-box;"></div>
<svg style="left:44px;top:483px;" width="24" height="24" viewBox="0 0 24 24"><rect x="1" y="1" width="22" height="22" fill="#000"/><rect x="1.6" y="1.6" width="20.8" height="20.8" fill="none" stroke="#fff" stroke-width="1.2" stroke-dasharray="1.5 1.5"/><rect x="3.3" y="3.3" width="17.4" height="17.4" fill="#ef2929"/><path d="M6.5 9.5 C8 5 16 5 17.5 9.5" fill="none" stroke="#000" stroke-width="1.6"/><path d="M6 14 C7.5 19 16.5 19 18 14" fill="none" stroke="#fff" stroke-width="1.8"/></svg>
<svg style="left:76px;top:483px;" width="24" height="24" viewBox="0 0 24 24"><rect x="1" y="1" width="16" height="16" fill="#000"/><rect x="3" y="3" width="12" height="12" fill="#d3d7cf"/><rect x="7" y="7" width="16" height="16" fill="#000"/><rect x="7.6" y="7.6" width="14.8" height="14.8" fill="none" stroke="#fff" stroke-width="1.2" stroke-dasharray="1.5 1.5"/><rect x="9.2" y="9.2" width="11.6" height="11.6" fill="#c4454a"/><rect x="9.2" y="9.2" width="6" height="6" fill="#e58d8d"/></svg>
<svg style="left:108px;top:483px;" width="24" height="24" viewBox="0 0 24 24"><rect x="7" y="7" width="16" height="16" fill="#000"/><rect x="7.6" y="7.6" width="14.8" height="14.8" fill="none" stroke="#fff" stroke-width="1.2" stroke-dasharray="1.5 1.5"/><rect x="9.2" y="9.2" width="11.6" height="11.6" fill="#a9aba6"/><rect x="1" y="1" width="16" height="16" fill="#000"/><rect x="3" y="3" width="12" height="12" fill="#ef2929"/><rect x="8" y="8" width="7.5" height="7.5" fill="#e58d8d" stroke="#fff" stroke-width=".8" stroke-dasharray="1.5 1.5"/></svg>
<svg style="left:140px;top:483px;" width="24" height="24" viewBox="0 0 24 24"><rect x="1" y="1" width="16" height="16" fill="#000"/><rect x="3" y="3" width="12" height="12" fill="#d3d7cf"/><rect x="7" y="7" width="16" height="16" fill="#000"/><rect x="7.6" y="7.6" width="14.8" height="14.8" fill="none" stroke="#fff" stroke-width="1.2" stroke-dasharray="1.5 1.5"/><rect x="9.2" y="9.2" width="11.6" height="11.6" fill="#a9aba6"/><rect x="8" y="8" width="8" height="8" fill="#ef2929"/></svg>
<div style="left:5px;top:518.5px;width:13px;height:13px;background:#8a8a8a;border:1px solid #a4a4a4;border-radius:2.5px;box-sizing:border-box;"></div>
<svg style="left:5px;top:518.5px;" width="13" height="13" viewBox="0 0 13 13"><path d="M3.6 3.6 L9.4 9.4 M9.4 3.6 L3.6 9.4" stroke="#fff" stroke-width="2.1"/></svg>
<div class="t" style="left:23.4px;top:515.0px;font-size:13px;line-height:18px;color:#484848;letter-spacing:-0.216px;">Antialiasing</div>
<div style="left:5px;top:541px;width:13px;height:13px;background:#888;border:1px solid #a0a0a0;border-radius:2.5px;box-sizing:border-box;"></div>
<div class="t" style="left:23.4px;top:538.0px;font-size:13px;line-height:18px;color:#303030;letter-spacing:-0.299px;">Feather edges</div>
<svg style="left:24px;top:1046px;" width="26" height="28" viewBox="0 0 26 28"><path d="M3 17 L7 10 L19 10 L23 17 L23 24 L3 24 Z" fill="#e4e4e2" stroke="#bdbdbb" stroke-width="1"/><path d="M3 17 L23 17" stroke="#bbb" stroke-width="1"/><path d="M10.5 1 L15.500 1 L15.5 8 L20 8 L13 15 L6 8 L10.5 8 Z" fill="#73d216" stroke="#4e9a06" stroke-width=".8"/></svg>
<svg style="left:92px;top:1047px;" width="26" height="26" viewBox="0 0 26 26"><path d="M8 7 C16 3 23 9 22 16 C21 23 12 26 7 20" fill="none" stroke="#f57900" stroke-width="2.6"/><path d="M3 3 L4 12 L12.500 9 Z" fill="#f57900"/></svg>
<svg style="left:162px;top:1047px;" width="24" height="24" viewBox="0 0 24 24"><path d="M4 4 L20 20 M20 4 L4 20" stroke="#dd0000" stroke-width="4.6"/></svg>
<svg style="left:230px;top:1046px;" width="28" height="28" viewBox="0 0 28 28"><path d="M14 23.500 C20 23.500 23.500 19.500 23.500 14.500 C23.500 9 19.500 5.500 14.500 5.500 C10 5.500 7 8.500 6.500 12" fill="none" stroke="#f57900" stroke-width="3.400" stroke-linecap="round"/><path d="M14 23.500 C20 23.500 23.500 19.500 23.500 14.500 C23.500 9 19.500 5.500 14.500 5.500 C10 5.500 7 8.500 6.500 12" fill="none" stroke="#fce94f" stroke-width="1.600" stroke-linecap="round"/><path d="M2 11 L11.500 11 L6.500 17.500 Z" fill="#fcaf3e" stroke="#f57900" stroke-width=".800"/><circle cx="6.500" cy="23" r="3.200" fill="#3465a4" stroke="#204a87" stroke-width=".800"/><rect x="4.500" y="21.800" width="4" height="2.200" fill="#cfe0f5"/></svg>
<div style="left:282px;top:53px;width:1px;height:1025px;background:#9c9c9c;"></div>
<div style="left:280.5px;top:559px;width:1.5px;height:3px;background:#2a2a2a;"></div>
<div style="left:280.5px;top:565px;width:1.5px;height:3px;background:#2a2a2a;"></div>
<div style="left:280.5px;top:571px;width:1.5px;height:3px;background:#2a2a2a;"></div>
<div style="left:1588px;top:50px;width:332px;height:1028px;background:#767676;"></div>
<div style="left:1587.5px;top:50px;width:1px;height:1028px;background:#9a9a9a;"></div>
<div style="left:1590.5px;top:50px;width:1px;height:1028px;background:#8a8a8a;"></div>
<div style="left:1593px;top:634.5px;width:311px;height:15.5px;background:linear-gradient(#8c8c8c,#7e7e7e);border:1px solid #5c5c5c;box-sizing:border-box;"></div>
<div class="t" style="left:1595.4px;top:633.5px;font-size:13px;line-height:18px;color:#222;letter-spacing:-0.380px;">Opacity</div>
<div class="t" style="left:1871.9px;top:633.5px;font-size:13px;line-height:18px;color:#222;letter-spacing:-0.496px;">100,0</div>
<div style="left:1903px;top:634.5px;width:1.5px;height:15.5px;background:#222;"></div>
<div style="left:1905px;top:634.5px;width:11px;height:15.5px;background:#8a8a8a;border:1px solid #9c9c9c;border-radius:2px;box-sizing:border-box;"></div>
<svg style="left:1905px;top:634.5px;" width="11" height="16" viewBox="0 0 11 16"><path d="M2.500 5.500 L5.500 2.500 L8.500 5.500" fill="none" stroke="#666" stroke-width="1.400"/><path d="M2.500 9.500 L5.500 12.500 L8.500 9.500" fill="none" stroke="#222" stroke-width="1.600"/></svg>
<div class="t" style="left:1593.4px;top:656.0px;font-size:13px;line-height:18px;color:#222;letter-spacing:-0.749px;">Lock:</div>
<svg style="left:1626px;top:654px;" width="22" height="22" viewBox="0 0 22 22"><path d="M21 0 C18 1 14 7 12 11 L15 13.500 C18 9 21 4 21 0 Z" fill="#e08a1e" stroke="#8f5902" stroke-width=".700"/><path d="M12 11 L9 15.500 L12 18 L15 13.500 Z" fill="#e9e9e6" stroke="#777" stroke-width=".600"/><path d="M9 15.500 C6 15.500 5.500 19 1 22 C6 23 11 21.500 12 18 Z" fill="#111"/></svg>
<svg style="left:1652px;top:654px;" width="22" height="22" viewBox="0 0 22 22"><path d="M11 .8 L15.200 5.800 L12.400 5.800 L12.400 9.600 L16.200 9.600 L16.200 6.800 L21.200 11 L16.200 15.200 L16.200 12.400 L12.400 12.400 L12.400 16.200 L15.200 16.200 L11 21.200 L6.800 16.200 L9.600 16.200 L9.600 12.400 L5.800 12.400 L5.800 15.200 L.8 11 L5.800 6.800 L5.800 9.600 L9.600 9.600 L9.600 5.800 L6.800 5.800 Z" fill="#6f9bd0" stroke="#204a87" stroke-width="1"/></svg>
<div style="left:1679px;top:654px;width:22px;height:22px;border:1px solid #111;box-sizing:border-box;background-color:#bdbdbd;background-image:linear-gradient(45deg,#8e8e8e 25%,transparent 25%,transparent 75%,#8e8e8e 75%),linear-gradient(45deg,#8e8e8e 25%,transparent 25%,transparent 75%,#8e8e8e 75%);background-size:10px 10px;background-position:0 0,5px 5px;"></div>
<div style="left:1593px;top:680px;width:324px;height:352px;background:#999999;border:1px solid #858585;border-bottom:none;box-sizing:border-box;"></div>
<svg style="left:1599px;top:694.5px;" width="18" height="13" viewBox="0 0 18 13"><path d="M1 6.500 C4 1 14 1 17 6.500 C14 12 4 12 1 6.500 Z" fill="#f2f2f2" stroke="#555" stroke-width="1.200"/><circle cx="9" cy="6.500" r="4.200" fill="#2f5fa8"/><circle cx="9" cy="6.500" r="1.800" fill="#16305e"/><circle cx="7.800" cy="5.200" r=".900" fill="#9fc0ea"/></svg>
<div style="left:1669px;top:683px;width:21px;height:36px;background:#000;"></div><div style="left:1671px;top:685.0px;width:17px;height:10.7px;background:#6a4030;"></div><div style="left:1679px;top:685.0px;width:1px;height:10.7px;background:rgba(40,20,10,.45);"></div><div style="left:1671px;top:690.0px;width:17px;height:1px;background:rgba(40,20,10,.45);"></div><div style="left:1671px;top:695.7px;width:17px;height:10.7px;background-color:#9a9a9a;background-image:linear-gradient(45deg,#666 25%,transparent 25%,transparent 75%,#666 75%),linear-gradient(45deg,#666 25%,transparent 25%,transparent 75%,#666 75%);background-size:8px 8px;background-position:0 0,4px 4px;"></div><div style="left:1671px;top:706.4px;width:17px;height:10.7px;background-color:#9a9a9a;background-image:linear-gradient(45deg,#666 25%,transparent 25%,transparent 75%,#666 75%),linear-gradient(45deg,#666 25%,transparent 25%,transparent 75%,#666 75%);background-size:8px 8px;background-position:0 0,4px 4px;"></div>
<div class="t" style="left:1695.7px;top:692.0px;font-size:13px;line-height:18px;color:#222;font-weight:bold;letter-spacing:0.155px;">wood1 #1</div>
<svg style="left:1599px;top:734.5px;" width="18" height="13" viewBox="0 0 18 13"><path d="M1 6.500 C4 1 14 1 17 6.500 C14 12 4 12 1 6.500 Z" fill="#f2f2f2" stroke="#555" stroke-width="1.200"/><circle cx="9" cy="6.500" r="4.200" fill="#2f5fa8"/><circle cx="9" cy="6.500" r="1.800" fill="#16305e"/><circle cx="7.800" cy="5.200" r=".900" fill="#9fc0ea"/></svg>
<div style="left:1669px;top:723px;width:21px;height:36px;background:#000;"></div><div style="left:1671px;top:725.0px;width:17px;height:10.7px;background-color:#9a9a9a;background-image:linear-gradient(45deg,#666 25%,transparent 25%,transparent 75%,#666 75%),linear-gradient(45deg,#666 25%,transparent 25%,transparent 75%,#666 75%);background-size:8px 8px;background-position:0 0,4px 4px;"></div><div style="left:1671px;top:735.7px;width:17px;height:10.7px;background:#6a4030;"></div><div style="left:1679px;top:735.7px;width:1px;height:10.7px;background:rgba(40,20,10,.45);"></div><div style="left:1671px;top:740.7px;width:17px;height:1px;background:rgba(40,20,10,.45);"></div><div style="left:1671px;top:746.4px;width:17px;height:10.7px;background-color:#9a9a9a;background-image:linear-gradient(45deg,#666 25%,transparent 25%,transparent 75%,#666 75%),linear-gradient(45deg,#666 25%,transparent 25%,transparent 75%,#666 75%);background-size:8px 8px;background-position:0 0,4px 4px;"></div>
<div class="t" style="left:1695.7px;top:732.0px;font-size:13px;line-height:18px;color:#222;font-weight:bold;letter-spacing:0.155px;">wood2 #1</div>
<svg style="left:1599px;top:774.5px;" width="18" height="13" viewBox="0 0 18 13"><path d="M1 6.500 C4 1 14 1 17 6.500 C14 12 4 12 1 6.500 Z" fill="#f2f2f2" stroke="#555" stroke-width="1.200"/><circle cx="9" cy="6.500" r="4.200" fill="#2f5fa8"/><circle cx="9" cy="6.500" r="1.800" fill="#16305e"/><circle cx="7.800" cy="5.200" r=".900" fill="#9fc0ea"/></svg>
<div style="left:1669px;top:763px;width:21px;height:36px;background:#000;"></div><div style="left:1671px;top:765.0px;width:17px;height:10.7px;background-color:#9a9a9a;background-image:linear-gradient(45deg,#666 25%,transparent 25%,transparent 75%,#666 75%),linear-gradient(45deg,#666 25%,transparent 25%,transparent 75%,#666 75%);background-size:8px 8px;background-position:0 0,4px 4px;"></div><div style="left:1671px;top:775.7px;width:17px;height:10.7px;background-color:#9a9a9a;background-image:linear-gradient(45deg,#666 25%,transparent 25%,transparent 75%,#666 75%),linear-gradient(45deg,#666 25%,transparent 25%,transparent 75%,#666 75%);background-size:8px 8px;background-position:0 0,4px 4px;"></div><div style="left:1671px;top:786.4px;width:17px;height:10.7px;background:#6a4030;"></div><div style="left:1679px;top:786.4px;width:1px;height:10.7px;background:rgba(40,20,10,.45);"></div><div style="left:1671px;top:791.4px;width:17px;height:1px;background:rgba(40,20,10,.45);"></div>
<div class="t" style="left:1695.7px;top:772.0px;font-size:13px;line-height:18px;color:#222;font-weight:bold;letter-spacing:0.155px;">wood3 #1</div>
<svg style="left:1599px;top:814.5px;" width="18" height="13" viewBox="0 0 18 13"><path d="M1 6.500 C4 1 14 1 17 6.500 C14 12 4 12 1 6.500 Z" fill="#f2f2f2" stroke="#555" stroke-width="1.200"/><circle cx="9" cy="6.500" r="4.200" fill="#2f5fa8"/><circle cx="9" cy="6.500" r="1.800" fill="#16305e"/><circle cx="7.800" cy="5.200" r=".900" fill="#9fc0ea"/></svg>
<div style="left:1669px;top:803px;width:21px;height:36px;background:#000;"></div><div style="left:1671px;top:805.0px;width:17px;height:10.7px;background:#c17f5c;"></div><div style="left:1679px;top:805.0px;width:1px;height:10.7px;background:rgba(40,20,10,.45);"></div><div style="left:1671px;top:810.0px;width:17px;height:1px;background:rgba(40,20,10,.45);"></div><div style="left:1671px;top:815.7px;width:17px;height:10.7px;background-color:#9a9a9a;background-image:linear-gradient(45deg,#666 25%,transparent 25%,transparent 75%,#666 75%),linear-gradient(45deg,#666 25%,transparent 25%,transparent 75%,#666 75%);background-size:8px 8px;background-position:0 0,4px 4px;"></div><div style="left:1671px;top:826.4px;width:17px;height:10.7px;background-color:#9a9a9a;background-image:linear-gradient(45deg,#666 25%,transparent 25%,transparent 75%,#666 75%),linear-gradient(45deg,#666 25%,transparent 25%,transparent 75%,#666 75%);background-size:8px 8px;background-position:0 0,4px 4px;"></div>
<div class="t" style="left:1695.5px;top:812.0px;font-size:13px;line-height:18px;color:#222;letter-spacing:-0.735px;">wood1</div>
<svg style="left:1599px;top:854.5px;" width="18" height="13" viewBox="0 0 18 13"><path d="M1 6.500 C4 1 14 1 17 6.500 C14 12 4 12 1 6.500 Z" fill="#f2f2f2" stroke="#555" stroke-width="1.200"/><circle cx="9" cy="6.500" r="4.200" fill="#2f5fa8"/><circle cx="9" cy="6.500" r="1.800" fill="#16305e"/><circle cx="7.800" cy="5.200" r=".900" fill="#9fc0ea"/></svg>
<div style="left:1669px;top:843px;width:21px;height:36px;background:#000;"></div><div style="left:1671px;top:845.0px;width:17px;height:10.7px;background-color:#9a9a9a;background-image:linear-gradient(45deg,#666 25%,transparent 25%,transparent 75%,#666 75%),linear-gradient(45deg,#666 25%,transparent 25%,transparent 75%,#666 75%);background-size:8px 8px;background-position:0 0,4px 4px;"></div><div style="left:1671px;top:855.7px;width:17px;height:10.7px;background:#c17f5c;"></div><div style="left:1679px;top:855.7px;width:1px;height:10.7px;background:rgba(40,20,10,.45);"></div><div style="left:1671px;top:860.7px;width:17px;height:1px;background:rgba(40,20,10,.45);"></div><div style="left:1671px;top:866.4px;width:17px;height:10.7px;background-color:#9a9a9a;background-image:linear-gradient(45deg,#666 25%,transparent 25%,transparent 75%,#666 75%),linear-gradient(45deg,#666 25%,transparent 25%,transparent 75%,#666 75%);background-size:8px 8px;background-position:0 0,4px 4px;"></div>
<div class="t" style="left:1695.5px;top:852.0px;font-size:13px;line-height:18px;color:#222;letter-spacing:-0.735px;">wood2</div>
<div style="left:1594px;top:881px;width:322.5px;height:40px;background:#dedede;"></div>
<svg style="left:1599px;top:894.5px;" width="18" height="13" viewBox="0 0 18 13"><path d="M1 6.500 C4 1 14 1 17 6.500 C14 12 4 12 1 6.500 Z" fill="#f2f2f2" stroke="#555" stroke-width="1.200"/><circle cx="9" cy="6.500" r="4.200" fill="#2f5fa8"/><circle cx="9" cy="6.500" r="1.800" fill="#16305e"/><circle cx="7.800" cy="5.200" r=".900" fill="#9fc0ea"/></svg>
<div style="left:1669px;top:883px;width:21px;height:36px;background:#fff;"></div><div style="left:1671px;top:885.0px;width:17px;height:10.7px;background-color:#9a9a9a;background-image:linear-gradient(45deg,#666 25%,transparent 25%,transparent 75%,#666 75%),linear-gradient(45deg,#666 25%,transparent 25%,transparent 75%,#666 75%);background-size:8px 8px;background-position:0 0,4px 4px;"></div><div style="left:1671px;top:895.7px;width:17px;height:10.7px;background-color:#9a9a9a;background-image:linear-gradient(45deg,#666 25%,transparent 25%,transparent 75%,#666 75%),linear-gradient(45deg,#666 25%,transparent 25%,transparent 75%,#666 75%);background-size:8px 8px;background-position:0 0,4px 4px;"></div><div style="left:1671px;top:906.4px;width:17px;height:10.7px;background:#5e3a2b;"></div><div style="left:1679px;top:906.4px;width:1px;height:10.7px;background:rgba(40,20,10,.45);"></div><div style="left:1671px;top:911.4px;width:17px;height:1px;background:rgba(40,20,10,.45);"></div>
<div class="t" style="left:1695.5px;top:892.0px;font-size:13px;line-height:18px;color:#222;letter-spacing:-0.735px;">wood3</div>
<div style="left:1669px;top:923px;width:21px;height:36px;background:#000;"></div><div style="left:1671px;top:925.0px;width:17px;height:10.7px;background:#c17f5c;"></div><div style="left:1679px;top:925.0px;width:1px;height:10.7px;background:rgba(40,20,10,.45);"></div><div style="left:1671px;top:930.0px;width:17px;height:1px;background:rgba(40,20,10,.45);"></div><div style="left:1671px;top:935.7px;width:17px;height:10.7px;background:#c17f5c;"></div><div style="left:1679px;top:935.7px;width:1px;height:10.7px;background:rgba(40,20,10,.45);"></div><div style="left:1671px;top:940.7px;width:17px;height:1px;background:rgba(40,20,10,.45);"></div><div style="left:1671px;top:946.4px;width:17px;height:10.7px;background:#5e3a2b;"></div><div style="left:1679px;top:946.4px;width:1px;height:10.7px;background:rgba(40,20,10,.45);"></div><div style="left:1671px;top:951.4px;width:17px;height:1px;background:rgba(40,20,10,.45);"></div>
<div style="left:1694.2px;top:931px;width:222.29999999999995px;height:20px;overflow:hidden;"><div class="t" style="left:0;top:0;font-size:13px;line-height:20px;color:#222;letter-spacing:-0.336px;white-space:nowrap;">P1260611-623-623-Coladj-With-Numbers</div></div>
<div style="left:1593px;top:1031.5px;width:324px;height:15px;background:#484848;"></div>
<div style="left:1593.5px;top:1032.5px;width:213px;height:13.5px;background:#a9a9a9;border:1px solid #6a6a6a;border-radius:2px;box-sizing:border-box;"></div>
<svg style="left:1599px;top:1050px;" width="26" height="26" viewBox="0 0 26 26"><path d="M7 3 H17 L23 9 V24 H7 Z" fill="#f2f2f0" stroke="#c8c8c6" stroke-width="1"/><path d="M17 3 V9 H23 Z" fill="#d3d3d0"/><path d="M6 1 V11 M1 6 H11" stroke="#000" stroke-width="2.600"/></svg>
<svg style="left:1638px;top:1050px;" width="28" height="26" viewBox="0 0 28 26"><path d="M3 7 H12 L14 9.500 H26 V24 H3 Z" fill="#6a9bd6" stroke="#3465a4" stroke-width="1"/><path d="M3 11 H26 V24 H3 Z" fill="#7fb0e6"/><path d="M6 1 V11 M1 6 H11" stroke="#000" stroke-width="2.600"/></svg>
<svg style="left:1680px;top:1052px;" width="24" height="22" viewBox="0 0 24 22"><path d="M2.500 14.500 L12 5 L21.500 14.500" fill="none" stroke="#f57900" stroke-width="3.400"/></svg>
<svg style="left:1720px;top:1052px;" width="24" height="22" viewBox="0 0 24 22"><path d="M2.500 6.500 L12 16 L21.500 6.500" fill="none" stroke="#f57900" stroke-width="3.400"/></svg>
<svg style="left:1759px;top:1050px;" width="26" height="26" viewBox="0 0 26 26"><rect x="7.500" y="7.500" width="17" height="17" fill="#3465a4" stroke="#204a87" stroke-width="1.400"/><rect x="1.500" y="1.500" width="13" height="13" fill="#729fcf" stroke="#204a87" stroke-width="1.400"/><rect x="3" y="3" width="10" height="10" fill="none" stroke="#cfe0f5" stroke-width="1"/></svg>
<svg style="left:1799px;top:1050px;" width="28" height="26" viewBox="0 0 28 26"><g fill="#fff"><path d="M5 3 H15 L12 7.500 H2 Z"/><path d="M5 10.500 H15 L12 15 H2 Z"/><path d="M5 18 H15 L12 22.500 H2 Z"/></g><path d="M21 3 V17" stroke="#f5a623" stroke-width="1.800"/><path d="M17.500 15.500 L21 21.500 L24.500 15.500 Z" fill="#f5a623"/></svg>
<svg style="left:1838px;top:1050px;" width="28" height="26" viewBox="0 0 28 26"><path d="M8 12 H26 L22 24 H4 Z" fill="#eeeeec" stroke="#d0d0d0" stroke-width=".800"/><path d="M4 2 H15 V10 C15 13 11 15 9.500 16 C8 15 4 13 4 10 Z" fill="#c9cec4" stroke="#aaa" stroke-width=".800"/></svg>
<svg style="left:1882px;top:1051px;" width="24" height="24" viewBox="0 0 24 24"><path d="M4 4 L20 20 M20 4 L4 20" stroke="#dd0000" stroke-width="4.600"/></svg>
<div style="left:1106px;top:36px;width:810px;height:598px;box-shadow:0 2px 9px 0 rgba(0,0,0,.4);background:#f0f0f0;"></div>
<div style="left:1106px;top:36px;width:810px;height:598px;background:#f0f0f0;border:1px solid #0078d7;box-sizing:border-box;"></div>
<div style="left:1106px;top:36px;width:810px;height:31px;background:#0078d7;"></div>
<svg style="left:1115px;top:43px;" width="16" height="16" viewBox="0 0 16 16"><rect width="16" height="16" fill="#fff"/><path d="M3.500 14.500 C3.500 12 5 10 5.200 7.500 L11.200 6.800 C11.300 9.500 12.600 12 12.400 14.300 C9.500 15.600 6 15.600 3.500 14.500 Z" fill="#2b1b8c"/><path d="M.800 5.200 C4 7.500 11 6.500 15 3.800 L15.200 5.200 C11.500 8.200 4 9 .600 6.600 Z" fill="#2b1b8c"/><path d="M6.200 1 L7.200 2.600 L9 2.800 L7.700 4 L8 5.700 L6.400 4.900 L4.900 5.700 L5.200 4 L4 2.700 L5.700 2.500 Z" fill="#2b1b8c"/><rect x="11.500" y="1.500" width="1.800" height="1.800" fill="#2b1b8c"/></svg>
<div class="t" style="left:1136.7px;top:43.5px;font-size:12px;line-height:16px;color:#fff;letter-spacing:-0.162px;">G'MIC-Qt for GIMP 2.10 - Windows 64 bits - 3.1.5</div>
<svg style="left:1790px;top:40px;" width="115" height="22" viewBox="0 0 115 22"><path d="M6 11.500 H16" stroke="#fff" stroke-width="1.2"/><path d="M51.500 6.500 H60.500 V15.500 H51.500 Z" fill="none" stroke="#fff" stroke-width="1.2"/><path d="M97 6 L107 16 M107 6 L97 16" stroke="#fff" stroke-width="1.2"/></svg>
<svg style="left:1119px;top:225.500px" width="290" height="183.500" viewBox="0 0 290 183.500"><defs></defs><rect x="0" y="0" width="290" height="183.5" fill="#553525" filter="url(#woodf)"/><g filter="url(#wood2)"><rect x="5.3" y="5.5" width="135.1" height="81.4" fill="#6c4b37"/><rect x="5.3" y="98.8" width="135.1" height="82.0" fill="#6c4b37"/><rect x="151.7" y="5.5" width="134.9" height="81.4" fill="#6c4b37"/><rect x="151.7" y="98.8" width="134.9" height="82.0" fill="#6c4b37"/></g><rect x="5.3" y="5.5" width="135.1" height="81.4" fill="none" stroke="#1a0c06" stroke-width="1.11" opacity=".85"/><rect x="6.8" y="7.0" width="132.1" height="78.4" fill="none" stroke="#2a140c" stroke-width="1.6" opacity=".22"/><rect x="5.3" y="98.8" width="135.1" height="82.0" fill="none" stroke="#1a0c06" stroke-width="1.11" opacity=".85"/><rect x="6.8" y="100.3" width="132.1" height="79.0" fill="none" stroke="#2a140c" stroke-width="1.6" opacity=".22"/><rect x="151.7" y="5.5" width="134.9" height="81.4" fill="none" stroke="#1a0c06" stroke-width="1.11" opacity=".85"/><rect x="153.2" y="7.0" width="131.9" height="78.4" fill="none" stroke="#2a140c" stroke-width="1.6" opacity=".22"/><rect x="151.7" y="98.8" width="134.9" height="82.0" fill="none" stroke="#1a0c06" stroke-width="1.11" opacity=".85"/><rect x="153.2" y="100.3" width="131.9" height="79.0" fill="none" stroke="#2a140c" stroke-width="1.6" opacity=".22"/><rect x="0.75" y="0.75" width="288.5" height="182.0" fill="none" stroke="#2a140c" stroke-width="1.5" opacity=".5"/><g transform="translate(72 48.5) scale(0.86)"><path d="M-25.5 -2 L-21.5 -5 L-21.5 2 Z M25.5 -2 L21.5 -5 L21.500 2 Z" fill="#5c5842"/><path d="M-20 9 C-10 16 14 16 22 8" fill="none" stroke="#24120a" stroke-width="2.5" opacity=".45"/><rect x="-20.500" y="-11" width="41" height="13.500" fill="none" stroke="#3a2a1c" stroke-width="3" opacity=".6"/><rect x="-20.500" y="-11" width="41" height="13.500" fill="none" stroke="#5a563f" stroke-width="1.400"/><path d="M-19.500 3 C-19 8 -14 12 0 12 C14 12 19 8 19.500 3 C12 0 -12 0 -19.500 3 Z" fill="#4a4630"/><ellipse cx="0" cy="7.300" rx="15.500" ry="4.800" fill="url(#brass)"/><path d="M-15.500 6.500 C-10 1.500 10 1.500 15.500 6.500" fill="none" stroke="#9a9478" stroke-width=".900"/></g><g transform="translate(218.5 48.5) scale(0.86)"><path d="M-25.5 -2 L-21.5 -5 L-21.5 2 Z M25.5 -2 L21.5 -5 L21.500 2 Z" fill="#5c5842"/><path d="M-20 9 C-10 16 14 16 22 8" fill="none" stroke="#24120a" stroke-width="2.5" opacity=".45"/><rect x="-20.500" y="-11" width="41" height="13.500" fill="none" stroke="#3a2a1c" stroke-width="3" opacity=".6"/><rect x="-20.500" y="-11" width="41" height="13.500" fill="none" stroke="#5a563f" stroke-width="1.400"/><path d="M-19.500 3 C-19 8 -14 12 0 12 C14 12 19 8 19.500 3 C12 0 -12 0 -19.500 3 Z" fill="#4a4630"/><ellipse cx="0" cy="7.300" rx="15.500" ry="4.800" fill="url(#brass)"/><path d="M-15.500 6.500 C-10 1.500 10 1.500 15.500 6.500" fill="none" stroke="#9a9478" stroke-width=".900"/></g><g transform="translate(218.5 142) scale(0.86)"><path d="M-25.5 -2 L-21.5 -5 L-21.5 2 Z M25.5 -2 L21.5 -5 L21.500 2 Z" fill="#5c5842"/><path d="M-20 9 C-10 16 14 16 22 8" fill="none" stroke="#24120a" stroke-width="2.5" opacity=".45"/><rect x="-20.500" y="-11" width="41" height="13.500" fill="none" stroke="#3a2a1c" stroke-width="3" opacity=".6"/><rect x="-20.500" y="-11" width="41" height="13.500" fill="none" stroke="#5a563f" stroke-width="1.400"/><path d="M-19.500 3 C-19 8 -14 12 0 12 C14 12 19 8 19.500 3 C12 0 -12 0 -19.500 3 Z" fill="#4a4630"/><ellipse cx="0" cy="7.300" rx="15.500" ry="4.800" fill="url(#brass)"/><path d="M-15.500 6.500 C-10 1.500 10 1.500 15.500 6.500" fill="none" stroke="#9a9478" stroke-width=".900"/></g><path transform="translate(10.61 34.50) scale(0.01538 -0.01538)" d="M71 0V195Q126 316 227.5 431.0Q329 546 483 671Q631 791 690.5 869.0Q750 947 750 1022Q750 1206 565 1206Q475 1206 427.5 1157.5Q380 1109 366 1012L83 1028Q107 1224 229.5 1327.0Q352 1430 563 1430Q791 1430 913.0 1326.0Q1035 1222 1035 1034Q1035 935 996.0 855.0Q957 775 896.0 707.5Q835 640 760.5 581.0Q686 522 616.0 466.0Q546 410 488.5 353.0Q431 296 403 231H1057V0Z" fill="#1a0f0b"/><rect x=".5" y=".5" width="289" height="182.500" fill="none" stroke="#2d1810" stroke-width="1.4"/></svg>
<svg style="left:1152px;top:340px" width="99" height="63" viewBox="0 0 98 62"><rect x="0" y="0" width="98" height="62" fill="#523324" filter="url(#woodf)"/><g filter="url(#wood)"><rect x="2.0" y="2.2" width="45.5" height="27.2" fill="#6a4936"/><rect x="2.0" y="33.3" width="45.5" height="27.7" fill="#6a4936"/><rect x="51.6" y="2.2" width="45.4" height="27.2" fill="#6a4936"/><rect x="51.6" y="33.3" width="45.4" height="27.7" fill="#6a4936"/></g><rect x="2.0" y="2.2" width="45.5" height="27.2" fill="none" stroke="#1a0c06" stroke-width="1.00" opacity=".85"/><rect x="3.5" y="3.7" width="42.5" height="24.2" fill="none" stroke="#2a140c" stroke-width="1.6" opacity=".22"/><rect x="2.0" y="33.3" width="45.5" height="27.7" fill="none" stroke="#1a0c06" stroke-width="1.00" opacity=".85"/><rect x="3.5" y="34.8" width="42.5" height="24.7" fill="none" stroke="#2a140c" stroke-width="1.6" opacity=".22"/><rect x="51.6" y="2.2" width="45.4" height="27.2" fill="none" stroke="#1a0c06" stroke-width="1.00" opacity=".85"/><rect x="53.1" y="3.7" width="42.4" height="24.2" fill="none" stroke="#2a140c" stroke-width="1.6" opacity=".22"/><rect x="51.6" y="33.3" width="45.4" height="27.7" fill="none" stroke="#1a0c06" stroke-width="1.00" opacity=".85"/><rect x="53.1" y="34.8" width="42.4" height="24.7" fill="none" stroke="#2a140c" stroke-width="1.6" opacity=".22"/><rect x="0.75" y="0.75" width="96.5" height="60.5" fill="none" stroke="#2a140c" stroke-width="1.5" opacity=".5"/><g transform="translate(25 14.5) scale(0.3)"><path d="M-25.5 -2 L-21.5 -5 L-21.5 2 Z M25.5 -2 L21.5 -5 L21.500 2 Z" fill="#5c5842"/><path d="M-20 9 C-10 16 14 16 22 8" fill="none" stroke="#24120a" stroke-width="2.5" opacity=".45"/><rect x="-20.500" y="-11" width="41" height="13.500" fill="none" stroke="#3a2a1c" stroke-width="3" opacity=".6"/><rect x="-20.500" y="-11" width="41" height="13.500" fill="none" stroke="#5a563f" stroke-width="1.400"/><path d="M-19.500 3 C-19 8 -14 12 0 12 C14 12 19 8 19.500 3 C12 0 -12 0 -19.500 3 Z" fill="#4a4630"/><ellipse cx="0" cy="7.300" rx="15.500" ry="4.800" fill="url(#brass)"/><path d="M-15.500 6.500 C-10 1.500 10 1.500 15.500 6.500" fill="none" stroke="#9a9478" stroke-width=".900"/></g><g transform="translate(25 46) scale(0.3)"><path d="M-25.5 -2 L-21.5 -5 L-21.5 2 Z M25.5 -2 L21.5 -5 L21.500 2 Z" fill="#5c5842"/><path d="M-20 9 C-10 16 14 16 22 8" fill="none" stroke="#24120a" stroke-width="2.5" opacity=".45"/><rect x="-20.500" y="-11" width="41" height="13.500" fill="none" stroke="#3a2a1c" stroke-width="3" opacity=".6"/><rect x="-20.500" y="-11" width="41" height="13.500" fill="none" stroke="#5a563f" stroke-width="1.400"/><path d="M-19.500 3 C-19 8 -14 12 0 12 C14 12 19 8 19.500 3 C12 0 -12 0 -19.500 3 Z" fill="#4a4630"/><ellipse cx="0" cy="7.300" rx="15.500" ry="4.800" fill="url(#brass)"/><path d="M-15.500 6.500 C-10 1.500 10 1.500 15.500 6.500" fill="none" stroke="#9a9478" stroke-width=".900"/></g><g transform="translate(74 14.5) scale(0.3)"><path d="M-25.5 -2 L-21.5 -5 L-21.5 2 Z M25.5 -2 L21.5 -5 L21.500 2 Z" fill="#5c5842"/><path d="M-20 9 C-10 16 14 16 22 8" fill="none" stroke="#24120a" stroke-width="2.5" opacity=".45"/><rect x="-20.500" y="-11" width="41" height="13.500" fill="none" stroke="#3a2a1c" stroke-width="3" opacity=".6"/><rect x="-20.500" y="-11" width="41" height="13.500" fill="none" stroke="#5a563f" stroke-width="1.400"/><path d="M-19.500 3 C-19 8 -14 12 0 12 C14 12 19 8 19.500 3 C12 0 -12 0 -19.500 3 Z" fill="#4a4630"/><ellipse cx="0" cy="7.300" rx="15.500" ry="4.800" fill="url(#brass)"/><path d="M-15.500 6.500 C-10 1.500 10 1.500 15.500 6.500" fill="none" stroke="#9a9478" stroke-width=".900"/></g><g transform="translate(74 46) scale(0.3)"><path d="M-25.5 -2 L-21.5 -5 L-21.5 2 Z M25.5 -2 L21.5 -5 L21.500 2 Z" fill="#5c5842"/><path d="M-20 9 C-10 16 14 16 22 8" fill="none" stroke="#24120a" stroke-width="2.5" opacity=".45"/><rect x="-20.500" y="-11" width="41" height="13.500" fill="none" stroke="#3a2a1c" stroke-width="3" opacity=".6"/><rect x="-20.500" y="-11" width="41" height="13.500" fill="none" stroke="#5a563f" stroke-width="1.400"/><path d="M-19.500 3 C-19 8 -14 12 0 12 C14 12 19 8 19.500 3 C12 0 -12 0 -19.500 3 Z" fill="#4a4630"/><ellipse cx="0" cy="7.300" rx="15.500" ry="4.800" fill="url(#brass)"/><path d="M-15.500 6.500 C-10 1.500 10 1.500 15.500 6.500" fill="none" stroke="#9a9478" stroke-width=".900"/></g></svg>
<div style="left:1151px;top:339px;width:101px;height:65px;border:2px solid #fff;box-sizing:border-box;"></div>
<svg style="left:1145px;top:333px;" width="10" height="10" viewBox="0 0 10 10"><circle cx="5" cy="5" r="3.800" fill="#c8c8c8" stroke="#8a8a8a" stroke-width="1.2"/></svg>
<div class="t" style="left:1157.3px;top:344.5px;font-size:11px;line-height:15px;color:#fff;text-shadow:-1px 0 #000,1px 0 #000,0 -1px #000,0 1px #000,1px 1px #000,-1px -1px #000,1px -1px #000,-1px 1px #000;letter-spacing:0.147px;">Reference</div>
<div style="left:1116px;top:570px;width:13px;height:13px;background:#fff;border:1px solid #333;box-sizing:border-box;"></div>
<svg style="left:1116px;top:570px;" width="13" height="13" viewBox="0 0 13 13"><path d="M3 6.500 L5.500 9.300 L10.300 3.500" fill="none" stroke="#222" stroke-width="1.3"/></svg>
<div class="t" style="left:1133.6px;top:569.7px;font-size:11px;line-height:15px;color:#000;letter-spacing:-0.356px;">Vorschau</div>
<div style="left:1280px;top:566px;width:21px;height:21px;background:#cccccc;border:1px solid #bfbfbf;box-sizing:border-box;"></div>
<svg style="left:1280px;top:566px;" width="21" height="21" viewBox="0 0 21 21"><circle cx="9" cy="8.500" r="5" fill="#e9e9e9" stroke="#b5b5b5" stroke-width="1.3"/><path d="M13 12.500 L17 17" stroke="#b0b0b0" stroke-width="2.2"/><path d="M5 15.500 H10" stroke="#b0b0b0" stroke-width="1.6"/></svg>
<div style="left:1302px;top:566px;width:64px;height:21px;background:#fff;border:1px solid #7a7a7a;box-sizing:border-box;"></div>
<div style="left:1304px;top:568px;width:44px;height:17px;overflow:hidden;"><div class="t" style="left:-2.5px;top:0;font-size:11px;line-height:17px;color:#000;letter-spacing:.25px;">15,54 %</div></div>
<svg style="left:1351px;top:572px;" width="12" height="9" viewBox="0 0 12 9"><path d="M1.500 2 L6 6.500 L10.500 2" fill="none" stroke="#333" stroke-width="1.2"/></svg>
<div style="left:1367.5px;top:566px;width:20.5px;height:21px;background:#e1e1e1;border:1px solid #adadad;box-sizing:border-box;"></div>
<svg style="left:1367.5px;top:566px;" width="21" height="21" viewBox="0 0 21 21"><path d="M12 11 L17.500 17" stroke="#f08a24" stroke-width="2.600" stroke-linecap="round"/><circle cx="8.500" cy="7.500" r="5.200" fill="#cfe3f7" stroke="#7fa6d6" stroke-width="1.400"/><path d="M3.500 15 H8.500 M6 12.500 V17.500" stroke="#2e9a1e" stroke-width="1.800"/></svg>
<svg style="left:1390.5px;top:566px;" width="21" height="21" viewBox="0 0 21 21"><rect x=".5" y=".5" width="20" height="20" fill="#e1e1e1" stroke="#adadad"/><g fill="#9fdf8a" stroke="#3c9a3c" stroke-width="1" stroke-linejoin="round"><path d="M3.500 9.500 C3.500 5.500 7.500 4 11.500 5 L11.500 2.800 L17 6.800 L11.500 10.800 L11.500 8.400 C9 7.600 6.500 8 6.200 10.200 Z"/><path d="M3.500 9.500 C3.500 5.500 7.500 4 11.500 5 L11.500 2.800 L17 6.800 L11.500 10.800 L11.500 8.400 C9 7.600 6.500 8 6.200 10.200 Z" transform="rotate(180 10.500 10)"/></g></svg>
<div style="left:1117px;top:601px;width:101px;height:22px;background:#e1e1e1;border:1px solid #adadad;box-sizing:border-box;"></div>
<svg style="left:1119px;top:604px;" width="16" height="17" viewBox="0 0 16 17"><path d="M2 2 L13 15" stroke="#c9c9c9" stroke-width="2.400"/><circle cx="3" cy="3" r="2.200" fill="none" stroke="#c0c0c0" stroke-width="1.400"/><circle cx="13" cy="14.500" r="2" fill="none" stroke="#c0c0c0" stroke-width="1.400"/><path d="M14 2 L8 9" stroke="#b8b8b8" stroke-width="2"/><path d="M8 9 L2 15.500" stroke="#3f6fb5" stroke-width="3" stroke-linecap="round"/></svg>
<div class="t" style="left:1137.2px;top:605.3px;font-size:11px;line-height:15px;color:#000;letter-spacing:-0.033px;">Einstellungen...</div>
<div style="left:1418px;top:85px;width:186px;height:21px;background:#fff;border:1px solid #7a7a7a;box-sizing:border-box;"></div>
<div class="t" style="left:1420.8px;top:88.0px;font-size:11px;line-height:15px;color:#8a8a8a;letter-spacing:-0.565px;">Suchen</div>
<svg style="left:1582px;top:88px;" width="15" height="15" viewBox="0 0 15 15"><rect x=".5" y=".5" width="13" height="13" fill="#f4f8fd" stroke="#8fb4df"/><circle cx="6.500" cy="6.500" r="3.300" fill="#fff" stroke="#7f9cc0" stroke-width="1.200"/><path d="M9 9 L12.500 12.500" stroke="#e89a3c" stroke-width="1.600"/></svg>
<div style="left:1418px;top:111px;width:186px;height:417.5px;background:#fff;border:1px solid #828790;box-sizing:border-box;"></div>
<div class="t" style="left:1423.2px;top:117.1px;font-size:11px;line-height:15px;color:#000;letter-spacing:0.171px;">Verfügbare Filter (584)</div>
<div style="left:1419px;top:112px;width:166.6px;height:415.5px;overflow:hidden;"><div class="t" style="left:43.5px;top:27.0px;font-size:11px;line-height:15px;color:#000;letter-spacing:-0.982px;">RGB Tone</div><div class="t" style="left:43.5px;top:48.0px;font-size:11px;line-height:15px;color:#000;letter-spacing:-0.200px;">Saturation EQ</div><div class="t" style="left:43.5px;top:69.0px;font-size:11px;line-height:15px;color:#000;letter-spacing:-0.294px;">Select-Replace Color</div><div class="t" style="left:43.5px;top:90.0px;font-size:11px;line-height:15px;color:#000;letter-spacing:-0.110px;">Selective Desaturation</div><div class="t" style="left:43.5px;top:111.0px;font-size:11px;line-height:15px;color:#000;letter-spacing:-0.585px;">Sepia</div><div class="t" style="left:43.5px;top:132.0px;font-size:11px;line-height:15px;color:#000;letter-spacing:-0.490px;">Simulate Film</div><div class="t" style="left:43.5px;top:153.0px;font-size:11px;line-height:15px;color:#000;letter-spacing:0.042px;">Softlight</div><div class="t" style="left:43.5px;top:174.0px;font-size:11px;line-height:15px;color:#000;letter-spacing:-0.168px;">Specific Saturation</div><div class="t" style="left:43.5px;top:195.0px;font-size:11px;line-height:15px;color:#000;letter-spacing:-0.334px;">Temperature Balance</div><div class="t" style="left:43.5px;top:216.0px;font-size:11px;line-height:15px;color:#000;letter-spacing:-0.428px;">Tone Presets</div><div class="t" style="left:43.5px;top:237.0px;font-size:11px;line-height:15px;color:#000;letter-spacing:-0.263px;">Transfer Colors [Histogram</div><div class="t" style="left:43.5px;top:258.0px;font-size:11px;line-height:15px;color:#000;letter-spacing:-0.263px;">Transfer Colors [Patch-Bas</div><div style="left:40.5px;top:276.5px;width:126px;height:20px;background:#cce8ff;border:1px dotted #e8944a;box-sizing:border-box;"></div><div class="t" style="left:43.5px;top:279.0px;font-size:11px;line-height:15px;color:#000;letter-spacing:-0.263px;">Transfer Colors [PCA]</div><div class="t" style="left:43.5px;top:300.0px;font-size:11px;line-height:15px;color:#000;letter-spacing:-0.263px;">Transfer Colors [Variationa</div><div class="t" style="left:43.5px;top:321.0px;font-size:11px;line-height:15px;color:#000;letter-spacing:-0.537px;">Tune HSV Colors</div><div class="t" style="left:43.5px;top:342.0px;font-size:11px;line-height:15px;color:#000;letter-spacing:-0.165px;">User-Defined</div><div class="t" style="left:43.5px;top:363.0px;font-size:11px;line-height:15px;color:#000;letter-spacing:-0.389px;">Vibrance</div><div class="t" style="left:43.5px;top:384.0px;font-size:11px;line-height:15px;color:#000;letter-spacing:-0.153px;">Vintage Style</div><div class="t" style="left:43.5px;top:405.0px;font-size:11px;line-height:15px;color:#000;letter-spacing:-0.314px;">Zone System</div></div>
<div style="left:1587px;top:112px;width:16px;height:415.5px;background:#f0f0f0;"></div>
<div style="left:1587px;top:354.5px;width:16px;height:79.5px;background:#cdcdcd;"></div>
<svg style="left:1587px;top:112px;" width="16" height="17" viewBox="0 0 16 17"><path d="M4.500 10.500 L8 7 L11.500 10.500" fill="none" stroke="#505050" stroke-width="1.500"/></svg>
<svg style="left:1587px;top:510px;" width="16" height="17" viewBox="0 0 16 17"><path d="M4.500 6.500 L8 10 L11.500 6.500" fill="none" stroke="#505050" stroke-width="1.500"/></svg>
<div style="left:1428px;top:536px;width:21px;height:20px;background:#e1e1e1;border:1px solid #adadad;box-sizing:border-box;"></div>
<div style="left:1457px;top:536px;width:21px;height:20px;background:#cfcfcf;border:1px solid #bfbfbf;box-sizing:border-box;"></div>
<div style="left:1486px;top:536px;width:21px;height:20px;background:#cfcfcf;border:1px solid #bfbfbf;box-sizing:border-box;"></div>
<div style="left:1515px;top:536px;width:21px;height:20px;background:#cfcfcf;border:1px solid #bfbfbf;box-sizing:border-box;"></div>
<div style="left:1544px;top:536px;width:21px;height:20px;background:#e1e1e1;border:1px solid #adadad;box-sizing:border-box;"></div>
<div style="left:1573px;top:536px;width:21px;height:20px;background:#e1e1e1;border:1px solid #adadad;box-sizing:border-box;"></div>
<svg style="left:1428px;top:536px;" width="21" height="20" viewBox="0 0 21 20"><path d="M5 3.500 H12.500 V15 L8.800 11.500 L5 15 Z" fill="#1b7d1b" stroke="#0c4f0c" stroke-width="1"/><path d="M13.500 6.500 V12.500 M10.500 9.500 H16.500" stroke="#0c4f0c" stroke-width="2.800"/><path d="M13.500 7.200 V11.800 M11.200 9.500 H15.800" stroke="#eaffea" stroke-width="1.200"/></svg>
<svg style="left:1457px;top:536px;" width="21" height="20" viewBox="0 0 21 20"><path d="M5 3.500 H12.500 V15 L8.800 11.500 L5 15 Z" fill="#9a9a9a" stroke="#8a8a8a" stroke-width="1"/><path d="M10.500 9.500 H16.500" stroke="#888" stroke-width="2.600"/><path d="M11.200 9.500 H15.800" stroke="#eee" stroke-width="1"/></svg>
<svg style="left:1486px;top:536px;" width="21" height="20" viewBox="0 0 21 20"><rect x="3.500" y="2.800" width="14" height="6.400" fill="#fbfbfb"/><rect x="3.500" y="10.800" width="14" height="6.400" fill="#fbfbfb"/><text x="4.500" y="8.300" font-family="Liberation Sans" font-size="6" font-weight="bold" fill="#8a8a8a">Abc</text><text x="4.500" y="16.300" font-family="Liberation Sans" font-size="6" font-weight="bold" fill="#8a8a8a">Def</text></svg>
<svg style="left:1515px;top:536px;" width="21" height="20" viewBox="0 0 21 20"><circle cx="10.500" cy="10" r="7" fill="#aeaeae"/><path d="M10.500 10 L6 4.600 A7 7 0 0 1 15 4.600 Z" fill="#c9c9c9"/><path d="M10.500 10 L17.300 11.500 A7 7 0 0 1 11.500 16.900 Z" fill="#9a9a9a"/></svg>
<svg style="left:1544px;top:536px;" width="21" height="20" viewBox="0 0 21 20"><g stroke="#2f8f2f" stroke-width="1.400" fill="none"><path d="M3.500 5 H11 M3.500 10 H11 M3.500 15 H11"/><rect x="13.500" y="3" width="3.800" height="3.800"/><path d="M13 10 L14.800 12 L17.800 8"/><rect x="13.500" y="13.200" width="3.800" height="3.800"/></g></svg>
<svg style="left:1573px;top:536px;" width="21" height="20" viewBox="0 0 21 20"><path d="M3.500 6 H17.500 L10.500 13 Z" fill="#1d8c1d" stroke="#0c4f0c" stroke-width=".800"/><path d="M4.500 10 H16.500 L10.500 17 Z" fill="#35b035" stroke="#0c4f0c" stroke-width=".800"/><rect x="7.500" y="3" width="6" height="3.500" fill="#1d8c1d"/></svg>
<svg style="left:1428px;top:564px;" width="21" height="20" viewBox="0 0 21 20"><rect x=".5" y=".5" width="20" height="19" fill="#e1e1e1" stroke="#adadad"/><g fill="#9fdf8a" stroke="#3c9a3c" stroke-width="1" stroke-linejoin="round"><path d="M3.500 9.500 C3.500 5.500 7.500 4 11.500 5 L11.500 2.800 L17 6.800 L11.500 10.800 L11.500 8.400 C9 7.600 6.500 8 6.200 10.200 Z"/><path d="M3.500 9.500 C3.500 5.500 7.500 4 11.500 5 L11.500 2.800 L17 6.800 L11.500 10.800 L11.500 8.400 C9 7.600 6.500 8 6.200 10.200 Z" transform="rotate(180 10.500 10)"/></g></svg>
<div style="left:1456px;top:567px;width:13px;height:13px;background:#fff;border:1px solid #333;box-sizing:border-box;"></div>
<svg style="left:1456px;top:567px;" width="13" height="13" viewBox="0 0 13 13"><path d="M3 6.500 L5.500 9.300 L10.300 3.500" fill="none" stroke="#222" stroke-width="1.300"/></svg>
<div class="t" style="left:1473.7px;top:566.5px;font-size:11px;line-height:15px;color:#000;letter-spacing:0.346px;">Internet</div>
<div class="t" style="left:1619.4px;top:88.0px;font-size:11.5px;line-height:16px;color:#000;font-weight:bold;letter-spacing:-0.037px;">Transfer Colors [PCA]</div>
<div style="left:1846px;top:86px;width:21.5px;height:20px;background:#e1e1e1;border:1px solid #adadad;box-sizing:border-box;"></div>
<svg style="left:1846px;top:86px;" width="22" height="21" viewBox="0 0 22 21"><rect x="7.500" y="4.500" width="9" height="11" fill="#fff" stroke="#6f98c8"/><rect x="4.500" y="7.500" width="8" height="9.500" fill="#e6eefa" stroke="#6f98c8"/></svg>
<svg style="left:1875px;top:86px;" width="21" height="21" viewBox="0 0 21 21"><rect x=".5" y=".5" width="20" height="20" fill="#e1e1e1" stroke="#adadad"/><g fill="#9fdf8a" stroke="#3c9a3c" stroke-width="1" stroke-linejoin="round"><path d="M3.500 9.500 C3.500 5.500 7.500 4 11.500 5 L11.500 2.800 L17 6.800 L11.500 10.800 L11.500 8.400 C9 7.600 6.500 8 6.200 10.200 Z"/><path d="M3.500 9.500 C3.500 5.500 7.500 4 11.500 5 L11.500 2.800 L17 6.800 L11.500 10.800 L11.500 8.400 C9 7.600 6.500 8 6.200 10.200 Z" transform="rotate(180 10.500 10)"/></g></svg>
<div style="left:1619px;top:70px;width:278px;height:322px;overflow:hidden;"><div class="t" style="left:17.700000000000045px;top:63.5px;font-size:11px;line-height:15px;color:#000;white-space:nowrap;letter-spacing:-0.232px;">Channel(s)</div><div class="t" style="left:17.700000000000045px;top:89.5px;font-size:11px;line-height:15px;color:#000;white-space:nowrap;letter-spacing:-0.187px;">Reference Colors</div><div class="t" style="left:17.700000000000045px;top:124.5px;font-size:11px;line-height:15px;color:#000;white-space:nowrap;letter-spacing:-0.290px;">Preview Type</div><div style="left:107px;top:61px;width:175px;height:20px;background:#e1e1e1;border:1px solid #adadad;box-sizing:border-box;"></div><div class="t" style="left:110.70000000000005px;top:63.80000000000001px;font-size:11px;line-height:15px;color:#000;white-space:nowrap;letter-spacing:-0.650px;">All</div><svg style="left:270px;top:67px;" width="10" height="8" viewBox="0 0 10 8"><path d="M3 1.500 L7.500 6" fill="none" stroke="#333" stroke-width="1.100"/></svg><div style="left:107px;top:87px;width:175px;height:20px;background:#e1e1e1;border:1px solid #adadad;box-sizing:border-box;"></div><div class="t" style="left:110.70000000000005px;top:89.80000000000001px;font-size:11px;line-height:15px;color:#000;white-space:nowrap;letter-spacing:-0.184px;">Bottom Layer</div><svg style="left:270px;top:93px;" width="10" height="8" viewBox="0 0 10 8"><path d="M3 1.500 L7.500 6" fill="none" stroke="#333" stroke-width="1.100"/></svg><div style="left:107px;top:122px;width:175px;height:20px;background:#e1e1e1;border:1px solid #adadad;box-sizing:border-box;"></div><div class="t" style="left:110.70000000000005px;top:124.80000000000001px;font-size:11px;line-height:15px;color:#000;white-space:nowrap;letter-spacing:-0.607px;">Full</div><svg style="left:270px;top:128px;" width="10" height="8" viewBox="0 0 10 8"><path d="M3 1.500 L7.500 6" fill="none" stroke="#333" stroke-width="1.100"/></svg><div style="left:18px;top:113px;width:262px;height:1px;background:#a0a0a0;"></div><div style="left:18px;top:114px;width:262px;height:1px;background:#fff;"></div><div style="left:18px;top:148.5px;width:262px;height:1px;background:#a0a0a0;"></div><div style="left:18px;top:149.5px;width:262px;height:1px;background:#fff;"></div><div style="left:18px;top:185px;width:262px;height:1px;background:#a0a0a0;"></div><div style="left:18px;top:186px;width:262px;height:1px;background:#fff;"></div><div class="t" style="left:18.5px;top:155.5px;font-size:9.5px;line-height:13px;color:#000;white-space:nowrap;letter-spacing:0.041px;"><b>Note:</b> This filter needs at least two layers to work properly.</div><div class="t" style="left:269px;top:155.5px;font-size:9.5px;line-height:13px;color:#000;white-space:nowrap;">Set</div><div class="t" style="left:18.5px;top:166.5px;font-size:9.5px;line-height:13px;color:#000;white-space:nowrap;letter-spacing:-0.030px;">the <i>Input layers</i> option to handle multiple input layers.</div><div class="t" style="left:19px;top:192.5px;font-size:9.5px;line-height:13px;color:#000;white-space:nowrap;letter-spacing:-0.220px;">Author:</div><div class="t" style="left:53.200000000000045px;top:192.5px;font-size:9.5px;line-height:13px;color:#000;font-style:italic;white-space:nowrap;letter-spacing:-0.160px;"><span style="color:#0000ee;text-decoration:underline">David Tschumperlé</span></div><div class="t" style="left:133px;top:192.5px;font-size:9.5px;line-height:13px;color:#000;white-space:nowrap;">.</div><div class="t" style="left:153.20000000000005px;top:192.5px;font-size:9.5px;line-height:13px;color:#000;white-space:nowrap;letter-spacing:-0.192px;">Latest Update:</div><div class="t" style="left:217px;top:192.5px;font-size:9.5px;line-height:13px;color:#000;font-style:italic;white-space:nowrap;letter-spacing:-0.275px;">2020/01/13.</div></div>
<div style="left:1619px;top:392.5px;width:278px;height:16px;background:#f0f0f0;"></div>
<div style="left:1636px;top:393.5px;width:222px;height:14.5px;background:#cdcdcd;"></div>
<svg style="left:1621px;top:393px;" width="12" height="15" viewBox="0 0 12 15"><path d="M8 4 L4.500 7.500 L8 11" fill="none" stroke="#444" stroke-width="1.600"/></svg>
<svg style="left:1883px;top:393px;" width="12" height="15" viewBox="0 0 12 15"><path d="M4 4 L7.500 7.500 L4 11" fill="none" stroke="#444" stroke-width="1.600"/></svg>
<div style="left:1619px;top:424px;width:278px;height:1px;background:#a0a0a0;"></div>
<div style="left:1619px;top:425px;width:278px;height:1px;background:#fff;"></div>
<div class="t" style="left:1619px;top:436.5px;font-size:11.5px;line-height:16px;color:#000;font-weight:bold;letter-spacing:-0.029px;">Quellen und Ziel</div>
<svg style="left:1875px;top:434px;" width="21" height="20" viewBox="0 0 21 20"><rect x=".5" y=".5" width="20" height="19" fill="#e1e1e1" stroke="#adadad"/><g fill="#9fdf8a" stroke="#3c9a3c" stroke-width="1" stroke-linejoin="round"><path d="M3.500 9.500 C3.500 5.500 7.500 4 11.500 5 L11.500 2.800 L17 6.800 L11.500 10.800 L11.500 8.400 C9 7.600 6.500 8 6.200 10.200 Z"/><path d="M3.500 9.500 C3.500 5.500 7.500 4 11.500 5 L11.500 2.800 L17 6.800 L11.500 10.800 L11.500 8.400 C9 7.600 6.500 8 6.200 10.200 Z" transform="rotate(180 10.500 10)"/></g></svg>
<div class="t" style="left:1627.3px;top:472.5px;font-size:11px;line-height:15px;color:#000;letter-spacing:-0.215px;">Ursprungs-Ebenen</div>
<div class="t" style="left:1627.3px;top:498.5px;font-size:11px;line-height:15px;color:#000;letter-spacing:-0.493px;">Ziel</div>
<div style="left:1723px;top:470px;width:165px;height:20.5px;background:#e1e1e1;border:1px solid #adadad;box-sizing:border-box;"></div>
<div class="t" style="left:1726.5px;top:473.0px;font-size:11px;line-height:15px;color:#000;letter-spacing:-0.090px;">Aktive und darüber liegende</div>
<svg style="left:1872px;top:476px;" width="12" height="9" viewBox="0 0 12 9"><path d="M1.500 2 L6 6.500 L10.500 2" fill="none" stroke="#333" stroke-width="1.200"/></svg>
<div style="left:1723px;top:496px;width:165px;height:20.5px;background:#e1e1e1;border:1px solid #adadad;box-sizing:border-box;"></div>
<div class="t" style="left:1726.5px;top:499.0px;font-size:11px;line-height:15px;color:#000;letter-spacing:-0.097px;">Ebene ersetzen (Standard)</div>
<svg style="left:1872px;top:502px;" width="12" height="9" viewBox="0 0 12 9"><path d="M1.500 2 L6 6.500 L10.500 2" fill="none" stroke="#333" stroke-width="1.200"/></svg>
<div style="left:1585px;top:601px;width:73px;height:22px;background:#e1e1e1;border:1px solid #adadad;box-sizing:border-box;"></div>
<div style="left:1666px;top:601px;width:73px;height:22px;background:#e1e1e1;border:1px solid #adadad;box-sizing:border-box;"></div>
<div style="left:1747px;top:601px;width:77px;height:22px;background:#e1e1e1;border:1px solid #adadad;box-sizing:border-box;"></div>
<div style="left:1832px;top:601px;width:73px;height:22px;background:#e1e1e1;border:1px solid #adadad;box-sizing:border-box;"></div>
<svg style="left:1591px;top:604px;" width="16" height="17" viewBox="0 0 16 17"><path d="M3 3.500 L13 13.500 M13 3.500 L3 13.500" stroke="#b00" stroke-width="4.200" stroke-linecap="round"/><path d="M3 3.500 L13 13.500 M13 3.500 L3 13.500" stroke="#f04a3a" stroke-width="2.400" stroke-linecap="round"/></svg>
<div class="t" style="left:1608.6px;top:605.3px;font-size:11px;line-height:15px;color:#000;letter-spacing:-0.211px;">Abbruch</div>
<svg style="left:1676px;top:604px;" width="17" height="17" viewBox="0 0 17 17"><rect x="1" y="1.500" width="14.500" height="13.500" fill="#fff" stroke="#2d62c4" stroke-width="1.800"/><path d="M3 6 V3.500 H5.500 M11 3.500 H13.500 V6 M13.500 10.500 V13 H11 M5.500 13 H3 V10.500" fill="none" stroke="#e33" stroke-width="1.400"/></svg>
<div class="t" style="left:1693.3px;top:605.3px;font-size:11px;line-height:15px;color:#000;letter-spacing:-0.489px;">Vollbild</div>
<svg style="left:1752px;top:604px;" width="17" height="17" viewBox="0 0 17 17"><g transform="rotate(-12 8 8)"><rect x="2" y="2" width="12" height="12" fill="#fff" stroke="#bbb" stroke-width=".600"/><rect x="2" y="2" width="6" height="6" fill="#d22"/><rect x="8" y="8" width="6" height="6" fill="#d22"/></g></svg>
<div class="t" style="left:1767.9px;top:605.3px;font-size:11px;line-height:15px;color:#000;letter-spacing:-0.238px;">Anwenden</div>
<svg style="left:1852px;top:603px;" width="16" height="17" viewBox="0 0 16 17"><rect x="2" y="2" width="12" height="7" fill="#5a5a5a" stroke="#333" stroke-width=".800"/><rect x="3.500" y="3" width="9" height="3" fill="#d8b24a"/><path d="M5 9.500 H11 L9.500 13 H6.500 Z" fill="#e8a33a"/><rect x="6.500" y="13" width="3" height="2" fill="#c9c9c9"/></svg>
<div class="t" style="left:1869.4px;top:605.3px;font-size:11px;line-height:15px;color:#000;letter-spacing:-0.571px;">Ok</div>
<div style="left:0;top:1078px;width:1920px;height:2px;background:#1b2d40;"></div>
</div>
</body></html>
